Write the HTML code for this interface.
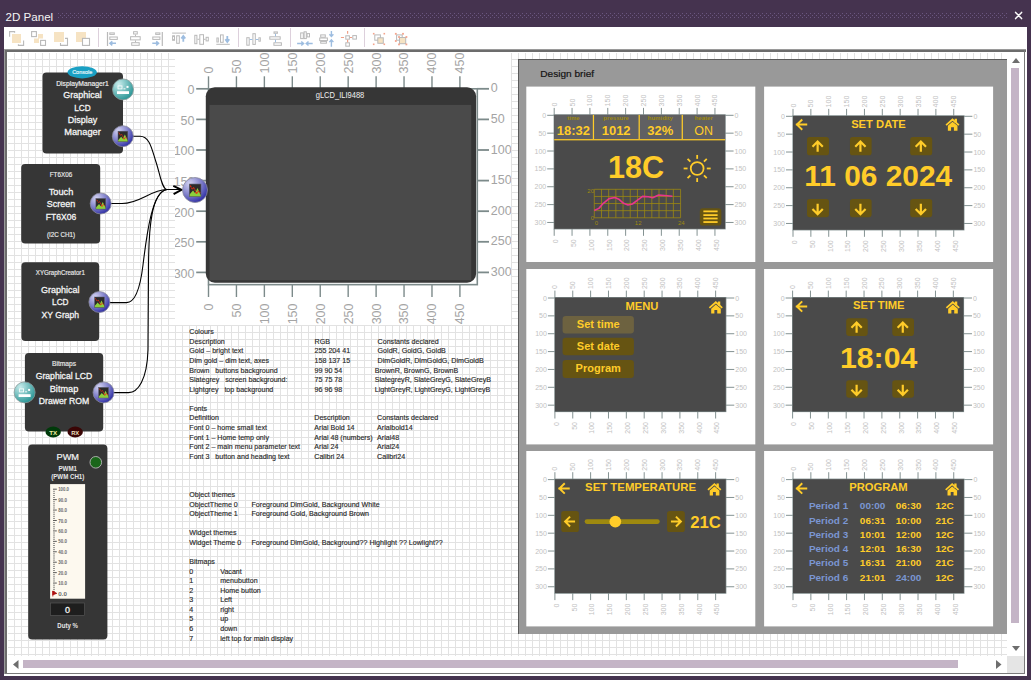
<!DOCTYPE html><html><head><meta charset="utf-8"><style>
html,body{margin:0;padding:0}
body{width:1031px;height:680px;overflow:hidden;position:relative;background:#45334f;font-family:"Liberation Sans",sans-serif}
.a{position:absolute}
</style></head><body>

<div class="a" style="left:5.5px;top:9px;font-size:11.6px;color:#f4f4f4;line-height:16px;">2D Panel</div>
<svg class="a" style="left:0;top:0" width="1031" height="27">
<defs><pattern id="dp" x="58" y="13" width="4" height="4" patternUnits="userSpaceOnUse"><rect x="0" y="0" width="1" height="1" fill="#6a5680"/><rect x="2" y="2" width="1" height="1" fill="#6a5680"/></pattern></defs>
<rect x="58" y="13" width="950" height="5" fill="url(#dp)"/>
<path d="M1015.6 12.4 L1021.6 18.6 M1021.6 12.4 L1015.6 18.6" stroke="#fafafa" stroke-width="1.5" stroke-linecap="round"/>
</svg>
<div class="a" style="left:4px;top:27px;width:1023px;height:649px;background:#fff"></div>
<svg class="a" style="left:0;top:27px" width="1031" height="22">
<path d="M9.6 9.8 V4.6 H14.6 V5.8" fill="none" stroke="#b9b9b9" stroke-width="1.1"/>
<rect x="12" y="7" width="9" height="9" fill="#f6e3c3"/>
<path d="M18.4 17.2 V18.4 H23.6 V13.4" fill="none" stroke="#b9b9b9" stroke-width="1.1"/>
<rect x="31.6" y="4.6" width="4.8" height="5" fill="none" stroke="#b9b9b9" stroke-width="1.1"/>
<path d="M38 7 H43 V11.5 H39 V16 H34 V11.5 H38Z" fill="#f6e3c3"/>
<rect x="40.6" y="13.4" width="4.9" height="5" fill="none" stroke="#b9b9b9" stroke-width="1.1"/>
<rect x="54" y="5" width="10" height="10" fill="#f6e3c3"/>
<path d="M65 11.4 H67.5 V18.4 H60.5 V16" fill="none" stroke="#b9b9b9" stroke-width="1.1"/>
<path d="M76 5 H86 V11 H82 V15 H76Z" fill="#f6e3c3"/>
<rect x="82.5" y="11.4" width="7" height="7" fill="none" stroke="#b9b9b9" stroke-width="1.1"/>
<rect x="98" y="1" width="1" height="19" fill="#ddd0dc"/>
<path d="M107.5 5 V19" fill="none" stroke="#b9b9b9" stroke-width="1.2"/>
<rect x="109.80" y="5.90" width="4.50" height="1.50" fill="none" stroke="#b9b9b9" stroke-width="1"/>
<rect x="109.80" y="10.00" width="7.50" height="2.40" fill="none" stroke="#b9b9b9" stroke-width="1"/>
<path d="M116 16.299999999999997 H110.5 M112.3 14.299999999999997 L110 16.299999999999997 L112.3 18.299999999999997" fill="none" stroke="#9dbde0" stroke-width="1.6"/>
<rect x="133.60" y="4.70" width="3.70" height="2.30" fill="none" stroke="#b9b9b9" stroke-width="1"/>
<rect x="130.60" y="9.70" width="9.60" height="3.20" fill="none" stroke="#b9b9b9" stroke-width="1"/>
<rect x="131.70" y="15.70" width="7.50" height="2.60" fill="none" stroke="#b9b9b9" stroke-width="1"/>
<path d="M135.5 7.5 V9.200000000000003 M135.5 13.399999999999999 V15.200000000000003" fill="none" stroke="#b9b9b9" stroke-width="1"/>
<path d="M162.3 5 V19" fill="none" stroke="#b9b9b9" stroke-width="1.2"/>
<rect x="155.70" y="5.90" width="4.20" height="1.50" fill="none" stroke="#b9b9b9" stroke-width="1"/>
<rect x="152.80" y="10.00" width="7.10" height="2.40" fill="none" stroke="#b9b9b9" stroke-width="1"/>
<path d="M152.3 16.299999999999997 H158 M156.2 14.299999999999997 L158.5 16.299999999999997 L156.2 18.299999999999997" fill="none" stroke="#9dbde0" stroke-width="1.6"/>
<path d="M172.1 6.100000000000001 H185.9" fill="none" stroke="#b9b9b9" stroke-width="1"/>
<rect x="172.60" y="8.80" width="1.90" height="4.50" fill="none" stroke="#b9b9b9" stroke-width="1"/>
<rect x="176.70" y="8.80" width="2.60" height="7.50" fill="none" stroke="#b9b9b9" stroke-width="1"/>
<path d="M183.3 14.799999999999997 V9.5 M181.3 11.5 L183.3 9 L185.3 11.5" fill="none" stroke="#9dbde0" stroke-width="1.8"/>
<rect x="194.80" y="8.30" width="2.10" height="8.40" fill="none" stroke="#b9b9b9" stroke-width="1"/>
<rect x="199.80" y="7.70" width="3.70" height="9.60" fill="none" stroke="#b9b9b9" stroke-width="1"/>
<rect x="206.10" y="10.30" width="2.20" height="3.60" fill="none" stroke="#b9b9b9" stroke-width="1"/>
<path d="M197.4 12.299999999999997 H199.3 M204 12.299999999999997 H205.6" fill="none" stroke="#b9b9b9" stroke-width="1"/>
<path d="M216.3 17.299999999999997 H229.8" fill="none" stroke="#b9b9b9" stroke-width="1"/>
<rect x="216.90" y="11.00" width="1.40" height="4.00" fill="none" stroke="#b9b9b9" stroke-width="1"/>
<rect x="220.50" y="7.90" width="2.70" height="7.40" fill="none" stroke="#b9b9b9" stroke-width="1"/>
<path d="M227.3 9 V14.5 M225.3 12.299999999999997 L227.3 15 L229.3 12.299999999999997" fill="none" stroke="#9dbde0" stroke-width="1.8"/>
<rect x="238" y="1" width="1" height="19" fill="#ddd0dc"/>
<rect x="246.80" y="10.70" width="2.40" height="7.50" fill="none" stroke="#b9b9b9" stroke-width="1"/>
<rect x="252.90" y="6.70" width="2.40" height="10.70" fill="none" stroke="#b9b9b9" stroke-width="1"/>
<rect x="258.90" y="10.80" width="1.40" height="3.40" fill="none" stroke="#b9b9b9" stroke-width="1"/>
<path d="M249.7 12.5 H252.4 M255.8 12.5 H258.4" fill="none" stroke="#9dbde0" stroke-width="1"/>
<rect x="274.00" y="4.90" width="3.40" height="1.40" fill="none" stroke="#b9b9b9" stroke-width="1"/>
<rect x="269.80" y="9.80" width="10.40" height="2.40" fill="none" stroke="#b9b9b9" stroke-width="1"/>
<rect x="273.90" y="15.80" width="7.50" height="2.50" fill="none" stroke="#b9b9b9" stroke-width="1"/>
<path d="M275.5 6.799999999999997 V9.299999999999997 M275.5 12.700000000000003 V15.299999999999997" fill="none" stroke="#9dbde0" stroke-width="1"/>
<rect x="290" y="1" width="1" height="19" fill="#ddd0dc"/>
<rect x="300.70" y="5.90" width="2.60" height="5.70" fill="none" stroke="#b9b9b9" stroke-width="1"/>
<rect x="304.10" y="4.80" width="2.20" height="6.80" fill="none" stroke="#b9b9b9" stroke-width="1"/>
<rect x="307.10" y="6.60" width="2.40" height="3.30" fill="none" stroke="#b9b9b9" stroke-width="1"/>
<path d="M297.1 16.5 H303.3 M301.3 14.5 L303.6 16.5 L301.3 18.5 M312.7 16.5 H306.5 M308.5 14.5 L306.2 16.5 L308.5 18.5" fill="none" stroke="#9dbde0" stroke-width="1.4"/>
<rect x="320.70" y="7.90" width="4.60" height="2.30" fill="none" stroke="#b9b9b9" stroke-width="1"/>
<rect x="319.70" y="11.00" width="7.70" height="2.60" fill="none" stroke="#b9b9b9" stroke-width="1"/>
<rect x="320.70" y="14.40" width="5.70" height="1.80" fill="none" stroke="#b9b9b9" stroke-width="1"/>
<path d="M331.4 4 V9.299999999999997 M329.4 7.299999999999997 L331.4 9.5 L333.4 7.299999999999997 M331.4 19.700000000000003 V13.100000000000001 M329.4 15.100000000000001 L331.4 12.899999999999999 L333.4 15.100000000000001" fill="none" stroke="#9dbde0" stroke-width="1.4"/>
<rect x="345.80" y="8.80" width="3.60" height="3.40" fill="none" stroke="#b9b9b9" stroke-width="1"/>
<rect x="352.80" y="8.60" width="3.60" height="3.50" fill="none" stroke="#b9b9b9" stroke-width="1"/>
<rect x="345.80" y="15.80" width="3.60" height="3.40" fill="none" stroke="#b9b9b9" stroke-width="1"/>
<path d="M340.9 10.5 H344 M347.6 4 V6.799999999999997 M350 10.5 H352 M347.6 12.700000000000003 V15.299999999999997" fill="none" stroke="#f0a088" stroke-width="1.2"/>
<rect x="364" y="1" width="1" height="19" fill="#ddd0dc"/>
<rect x="374.80" y="7.90" width="5.60" height="5.30" fill="none" stroke="#b9b9b9" stroke-width="1"/>
<rect x="377.80" y="10.80" width="5.50" height="5.50" fill="#f6e3c3" stroke="#b9b9b9" stroke-width="1"/>
<g fill="#f4a48c"><rect x="372.9" y="5.9" width="1.6" height="1.6"/><rect x="383.5" y="5.9" width="1.6" height="1.6"/><rect x="372.9" y="16.5" width="1.6" height="1.6"/><rect x="383.5" y="16.5" width="1.6" height="1.6"/></g>
<rect x="396.60" y="7.90" width="5.60" height="5.30" fill="none" stroke="#b9b9b9" stroke-width="1"/>
<rect x="399.50" y="10.50" width="6.20" height="6.20" fill="#f6e3c3" stroke="#b9b9b9" stroke-width="1"/>
<g fill="#f4a48c"><rect x="394.9" y="5.9" width="1.8" height="1.8"/><rect x="402.1" y="5.9" width="1.8" height="1.8"/><rect x="394.9" y="13.1" width="1.8" height="1.8"/><rect x="398.1" y="9.1" width="1.8" height="1.8"/><rect x="405.5" y="9.1" width="1.8" height="1.8"/><rect x="398.1" y="16.5" width="1.8" height="1.8"/><rect x="405.5" y="16.5" width="1.8" height="1.8"/></g>
</svg>
<div class="a" style="left:4px;top:49px;width:1022px;height:1px;background:#9a9a9a"></div>
<div class="a" style="left:4px;top:50px;width:1022px;height:2px;background:#6c6c6c"></div>
<div class="a" style="left:4px;top:49px;width:1px;height:625px;background:#9a9a9a"></div>
<div class="a" style="left:5px;top:50px;width:2px;height:624px;background:#6c6c6c"></div>
<div class="a" style="left:1024px;top:50px;width:1px;height:624px;background:#7a7a7a"></div>
<div class="a" style="left:5px;top:673px;width:1020px;height:1px;background:#7a7a7a"></div>
<div class="a" style="left:8px;top:53px;width:999px;height:603px;background-image:linear-gradient(to right,#e2e2e2 1px,transparent 1px),linear-gradient(to bottom,#e2e2e2 1px,transparent 1px);background-size:7px 7px;background-position:6px 0px,0px 6px;"></div>
<svg class="a" style="left:0;top:0" width="1031" height="680">
<path d="M1012 63 L1016 58 L1020 63Z" fill="#6e6e6e"/>
<rect x="1011" y="68" width="8" height="555" fill="#c4b4c6"/>
<path d="M1012 646 L1016 651 L1020 646Z" fill="#6e6e6e"/>
<path d="M18.5 660 L13 664.5 L18.5 669Z" fill="#6e6e6e"/>
<rect x="23" y="660" width="935" height="8" fill="#c4b4c6"/>
<path d="M996 660 L1001.5 664.5 L996 669Z" fill="#6e6e6e"/>
<rect x="1007" y="656" width="17" height="17" fill="#e5e5e5"/>
</svg>
<svg class="a" style="left:0;top:0" width="1031" height="680" font-family="Liberation Sans, sans-serif">
<defs>
<clipPath id="cv"><rect x="7" y="52" width="1000" height="604"/></clipPath>
<radialGradient id="gb" cx="0.3" cy="0.25" r="0.85"><stop offset="0" stop-color="#d4d4f2"/><stop offset="0.55" stop-color="#7c7cc8"/><stop offset="1" stop-color="#2424a0"/></radialGradient>
<radialGradient id="gt" cx="0.3" cy="0.25" r="0.85"><stop offset="0" stop-color="#c8ecec"/><stop offset="0.55" stop-color="#6ab8b8"/><stop offset="1" stop-color="#1f9090"/></radialGradient>
</defs>
<g clip-path="url(#cv)">
<rect x="175" y="52" width="336" height="273" fill="#fff"/>
<g clip-path="url(#rb)">
<clipPath id="rb"><rect x="175" y="52" width="336" height="273"/></clipPath>
<line x1="208.50" y1="76.3" x2="208.50" y2="88.8" stroke="#7c8a8a" stroke-width="1.4"/>
<line x1="208.50" y1="284.6" x2="208.50" y2="297" stroke="#7c8a8a" stroke-width="1.4"/>
<text transform="translate(212.90,73.5) rotate(-90)" font-size="12.5" fill="#a4a4a4">0</text>
<text transform="translate(212.90,303.5) rotate(-90)" font-size="12.5" fill="#a4a4a4" text-anchor="end">0</text>
<line x1="236.44" y1="76.3" x2="236.44" y2="88.8" stroke="#7c8a8a" stroke-width="1.4"/>
<line x1="236.44" y1="284.6" x2="236.44" y2="297" stroke="#7c8a8a" stroke-width="1.4"/>
<text transform="translate(240.84,73.5) rotate(-90)" font-size="12.5" fill="#a4a4a4">50</text>
<text transform="translate(240.84,303.5) rotate(-90)" font-size="12.5" fill="#a4a4a4" text-anchor="end">50</text>
<line x1="264.37" y1="76.3" x2="264.37" y2="88.8" stroke="#7c8a8a" stroke-width="1.4"/>
<line x1="264.37" y1="284.6" x2="264.37" y2="297" stroke="#7c8a8a" stroke-width="1.4"/>
<text transform="translate(268.77,73.5) rotate(-90)" font-size="12.5" fill="#a4a4a4">100</text>
<text transform="translate(268.77,303.5) rotate(-90)" font-size="12.5" fill="#a4a4a4" text-anchor="end">100</text>
<line x1="292.31" y1="76.3" x2="292.31" y2="88.8" stroke="#7c8a8a" stroke-width="1.4"/>
<line x1="292.31" y1="284.6" x2="292.31" y2="297" stroke="#7c8a8a" stroke-width="1.4"/>
<text transform="translate(296.70,73.5) rotate(-90)" font-size="12.5" fill="#a4a4a4">150</text>
<text transform="translate(296.70,303.5) rotate(-90)" font-size="12.5" fill="#a4a4a4" text-anchor="end">150</text>
<line x1="320.24" y1="76.3" x2="320.24" y2="88.8" stroke="#7c8a8a" stroke-width="1.4"/>
<line x1="320.24" y1="284.6" x2="320.24" y2="297" stroke="#7c8a8a" stroke-width="1.4"/>
<text transform="translate(324.64,73.5) rotate(-90)" font-size="12.5" fill="#a4a4a4">200</text>
<text transform="translate(324.64,303.5) rotate(-90)" font-size="12.5" fill="#a4a4a4" text-anchor="end">200</text>
<line x1="348.17" y1="76.3" x2="348.17" y2="88.8" stroke="#7c8a8a" stroke-width="1.4"/>
<line x1="348.17" y1="284.6" x2="348.17" y2="297" stroke="#7c8a8a" stroke-width="1.4"/>
<text transform="translate(352.57,73.5) rotate(-90)" font-size="12.5" fill="#a4a4a4">250</text>
<text transform="translate(352.57,303.5) rotate(-90)" font-size="12.5" fill="#a4a4a4" text-anchor="end">250</text>
<line x1="376.11" y1="76.3" x2="376.11" y2="88.8" stroke="#7c8a8a" stroke-width="1.4"/>
<line x1="376.11" y1="284.6" x2="376.11" y2="297" stroke="#7c8a8a" stroke-width="1.4"/>
<text transform="translate(380.51,73.5) rotate(-90)" font-size="12.5" fill="#a4a4a4">300</text>
<text transform="translate(380.51,303.5) rotate(-90)" font-size="12.5" fill="#a4a4a4" text-anchor="end">300</text>
<line x1="404.04" y1="76.3" x2="404.04" y2="88.8" stroke="#7c8a8a" stroke-width="1.4"/>
<line x1="404.04" y1="284.6" x2="404.04" y2="297" stroke="#7c8a8a" stroke-width="1.4"/>
<text transform="translate(408.44,73.5) rotate(-90)" font-size="12.5" fill="#a4a4a4">350</text>
<text transform="translate(408.44,303.5) rotate(-90)" font-size="12.5" fill="#a4a4a4" text-anchor="end">350</text>
<line x1="431.98" y1="76.3" x2="431.98" y2="88.8" stroke="#7c8a8a" stroke-width="1.4"/>
<line x1="431.98" y1="284.6" x2="431.98" y2="297" stroke="#7c8a8a" stroke-width="1.4"/>
<text transform="translate(436.38,73.5) rotate(-90)" font-size="12.5" fill="#a4a4a4">400</text>
<text transform="translate(436.38,303.5) rotate(-90)" font-size="12.5" fill="#a4a4a4" text-anchor="end">400</text>
<line x1="459.91" y1="76.3" x2="459.91" y2="88.8" stroke="#7c8a8a" stroke-width="1.4"/>
<line x1="459.91" y1="284.6" x2="459.91" y2="297" stroke="#7c8a8a" stroke-width="1.4"/>
<text transform="translate(464.31,73.5) rotate(-90)" font-size="12.5" fill="#a4a4a4">450</text>
<text transform="translate(464.31,303.5) rotate(-90)" font-size="12.5" fill="#a4a4a4" text-anchor="end">450</text>
<line x1="196.2" y1="88.80" x2="208.5" y2="88.80" stroke="#7c8a8a" stroke-width="1.7"/>
<line x1="477" y1="88.80" x2="489" y2="88.80" stroke="#7c8a8a" stroke-width="1.8"/>
<text x="194.5" y="94.20" font-size="12.5" fill="#a4a4a4" text-anchor="end">0</text>
<text x="490.8" y="92.40" font-size="12.5" fill="#a4a4a4">0</text>
<line x1="196.2" y1="119.40" x2="208.5" y2="119.40" stroke="#7c8a8a" stroke-width="1.7"/>
<line x1="477" y1="119.40" x2="489" y2="119.40" stroke="#7c8a8a" stroke-width="1.8"/>
<text x="194.5" y="124.80" font-size="12.5" fill="#a4a4a4" text-anchor="end">50</text>
<text x="490.8" y="123.00" font-size="12.5" fill="#a4a4a4">50</text>
<line x1="196.2" y1="150.00" x2="208.5" y2="150.00" stroke="#7c8a8a" stroke-width="1.7"/>
<line x1="477" y1="150.00" x2="489" y2="150.00" stroke="#7c8a8a" stroke-width="1.8"/>
<text x="194.5" y="155.40" font-size="12.5" fill="#a4a4a4" text-anchor="end">100</text>
<text x="490.8" y="153.60" font-size="12.5" fill="#a4a4a4">100</text>
<line x1="196.2" y1="180.60" x2="208.5" y2="180.60" stroke="#7c8a8a" stroke-width="1.7"/>
<line x1="477" y1="180.60" x2="489" y2="180.60" stroke="#7c8a8a" stroke-width="1.8"/>
<text x="194.5" y="186.00" font-size="12.5" fill="#a4a4a4" text-anchor="end">150</text>
<text x="490.8" y="184.20" font-size="12.5" fill="#a4a4a4">150</text>
<line x1="196.2" y1="211.20" x2="208.5" y2="211.20" stroke="#7c8a8a" stroke-width="1.7"/>
<line x1="477" y1="211.20" x2="489" y2="211.20" stroke="#7c8a8a" stroke-width="1.8"/>
<text x="194.5" y="216.60" font-size="12.5" fill="#a4a4a4" text-anchor="end">200</text>
<text x="490.8" y="214.80" font-size="12.5" fill="#a4a4a4">200</text>
<line x1="196.2" y1="241.80" x2="208.5" y2="241.80" stroke="#7c8a8a" stroke-width="1.7"/>
<line x1="477" y1="241.80" x2="489" y2="241.80" stroke="#7c8a8a" stroke-width="1.8"/>
<text x="194.5" y="247.20" font-size="12.5" fill="#a4a4a4" text-anchor="end">250</text>
<text x="490.8" y="245.40" font-size="12.5" fill="#a4a4a4">250</text>
<line x1="196.2" y1="272.40" x2="208.5" y2="272.40" stroke="#7c8a8a" stroke-width="1.7"/>
<line x1="477" y1="272.40" x2="489" y2="272.40" stroke="#7c8a8a" stroke-width="1.8"/>
<text x="194.5" y="277.80" font-size="12.5" fill="#a4a4a4" text-anchor="end">300</text>
<text x="490.8" y="276.00" font-size="12.5" fill="#a4a4a4">300</text>
<rect x="208.5" y="88.8" width="268.8" height="195.84" fill="none" stroke="#7c8a8a" stroke-width="1.6"/>
</g>
<rect x="205.8" y="87.3" width="270.3" height="195.4" rx="9" fill="#363636"/>
<rect x="209.5" y="104.9" width="261.7" height="175.3" fill="#4a4a4a"/>
<text x="340" y="97.8" font-size="9" fill="#f0f0f0" text-anchor="middle" textLength="48.5" lengthAdjust="spacingAndGlyphs">gLCD_ILI9488</text>
<path d="M133 136.2 H140 C150 136.2 152 150 156 162 C160 174 162 189.5 167 189.5 H181" fill="none" stroke="#000" stroke-width="1.1"/>
<path d="M111 203.5 H122 C140 203.5 150 190 167 189.5 H181" fill="none" stroke="#000" stroke-width="1.1"/>
<path d="M109.5 302.6 H126.5 C134 302.6 140 290 143 265 C146.6 235 152 191 167 189.5 H181" fill="none" stroke="#000" stroke-width="1.1"/>
<path d="M113.5 392.6 H128.5 C138 392.6 147 380 148 350 L148.5 270 C148.5 225 152 192 167 189.5 H181" fill="none" stroke="#000" stroke-width="1.1"/>
<path d="M173.3 185.8 L181.5 189.8 L173.6 194.2" fill="none" stroke="#000" stroke-width="2"/>
<rect x="42.5" y="72.5" width="80.5" height="81" rx="4" fill="#363636"/>
<ellipse cx="82.2" cy="72.3" rx="14.6" ry="6.1" fill="#1aa0c4"/>
<text x="82.2" y="73.8" font-size="5.5" fill="#e8f6fa" text-anchor="middle" textLength="20" lengthAdjust="spacingAndGlyphs" stroke="#e8f6fa" stroke-width="0.18">Console</text>
<text x="82.5" y="85.6" font-size="8" fill="#f0f0f0" text-anchor="middle" textLength="52.5" lengthAdjust="spacingAndGlyphs" stroke="#f0f0f0" stroke-width="0.18">DisplayManager1</text>
<text x="82.5" y="98.2" font-size="9.2" fill="#f4f4f4" text-anchor="middle" textLength="38.5" lengthAdjust="spacingAndGlyphs" stroke="#f4f4f4" stroke-width="0.3">Graphical</text>
<text x="82.5" y="110.7" font-size="9.2" fill="#f4f4f4" text-anchor="middle" textLength="16.5" lengthAdjust="spacingAndGlyphs" stroke="#f4f4f4" stroke-width="0.3">LCD</text>
<text x="82.5" y="123.0" font-size="9.2" fill="#f4f4f4" text-anchor="middle" textLength="29.5" lengthAdjust="spacingAndGlyphs" stroke="#f4f4f4" stroke-width="0.3">Display</text>
<text x="82.5" y="135.3" font-size="9.2" fill="#f4f4f4" text-anchor="middle" textLength="36.5" lengthAdjust="spacingAndGlyphs" stroke="#f4f4f4" stroke-width="0.3">Manager</text>
<circle cx="123" cy="89.4" r="10.5" fill="url(#gt)" stroke="#8a9a9a" stroke-width="0.8"/>
<rect x="117" y="91.2" width="12" height="2.8" fill="#fff"/>
<rect x="118" y="85.9" width="4" height="3" fill="none" stroke="#fff" stroke-width="0.8"/>
<rect x="123.5" y="88.4" width="2" height="0.9" fill="#fff"/><rect x="126.5" y="85.9" width="2" height="2" fill="#fff"/>
<circle cx="122.8" cy="136.2" r="10.5" fill="url(#gb)" stroke="#8a8a9a" stroke-width="0.8"/>
<rect x="118.00" y="131.20" width="9.80" height="10.60" fill="#2b2b2b"/>
<path d="M118.00 141.80 L118.00 140.21 L121.14 136.71 L122.90 138.83 L124.86 134.59 L127.80 140.53 L127.80 141.80Z" fill="#8cd03c"/>
<path d="M118.78 132.47 L120.45 135.23 L121.72 134.38 L122.90 136.50 L124.08 139.47 L125.35 137.03 L127.31 138.83" fill="none" stroke="#e82a10" stroke-width="0.90" stroke-dasharray="1.60 0.50"/>
<rect x="118.00" y="131.20" width="9.80" height="10.60" fill="none" stroke="#5a5a6a" stroke-width="0.50"/>
<rect x="21.2" y="164.1" width="79" height="79.4" rx="4" fill="#363636"/>
<text x="61" y="176.6" font-size="7" fill="#e8e8e8" text-anchor="middle" textLength="22.5" lengthAdjust="spacingAndGlyphs" stroke="#e8e8e8" stroke-width="0.18">FT6X06</text>
<text x="61" y="195.2" font-size="9.2" fill="#f4f4f4" text-anchor="middle" textLength="24.5" lengthAdjust="spacingAndGlyphs" stroke="#f4f4f4" stroke-width="0.3">Touch</text>
<text x="61" y="207.4" font-size="9.2" fill="#f4f4f4" text-anchor="middle" textLength="28.5" lengthAdjust="spacingAndGlyphs" stroke="#f4f4f4" stroke-width="0.3">Screen</text>
<text x="61" y="220.0" font-size="9.2" fill="#f4f4f4" text-anchor="middle" textLength="30.5" lengthAdjust="spacingAndGlyphs" stroke="#f4f4f4" stroke-width="0.3">FT6X06</text>
<text x="61" y="236.5" font-size="7" fill="#e8e8e8" text-anchor="middle" textLength="28" lengthAdjust="spacingAndGlyphs" stroke="#e8e8e8" stroke-width="0.18">(I2C CH1)</text>
<circle cx="100.7" cy="203.5" r="10.5" fill="url(#gb)" stroke="#8a8a9a" stroke-width="0.8"/>
<rect x="95.90" y="198.50" width="9.80" height="10.60" fill="#2b2b2b"/>
<path d="M95.90 209.10 L95.90 207.51 L99.04 204.01 L100.80 206.13 L102.76 201.89 L105.70 207.83 L105.70 209.10Z" fill="#8cd03c"/>
<path d="M96.68 199.77 L98.35 202.53 L99.62 201.68 L100.80 203.80 L101.98 206.77 L103.25 204.33 L105.21 206.13" fill="none" stroke="#e82a10" stroke-width="0.90" stroke-dasharray="1.60 0.50"/>
<rect x="95.90" y="198.50" width="9.80" height="10.60" fill="none" stroke="#5a5a6a" stroke-width="0.50"/>
<rect x="21.4" y="262.3" width="77.8" height="78.8" rx="4" fill="#363636"/>
<text x="60.3" y="274.8" font-size="7" fill="#e8e8e8" text-anchor="middle" textLength="49" lengthAdjust="spacingAndGlyphs" stroke="#e8e8e8" stroke-width="0.18">XYGraphCreator1</text>
<text x="60.3" y="293.3" font-size="9.2" fill="#f4f4f4" text-anchor="middle" textLength="38.5" lengthAdjust="spacingAndGlyphs" stroke="#f4f4f4" stroke-width="0.3">Graphical</text>
<text x="60.3" y="305.3" font-size="9.2" fill="#f4f4f4" text-anchor="middle" textLength="16.5" lengthAdjust="spacingAndGlyphs" stroke="#f4f4f4" stroke-width="0.3">LCD</text>
<text x="60.3" y="318.2" font-size="9.2" fill="#f4f4f4" text-anchor="middle" textLength="37.5" lengthAdjust="spacingAndGlyphs" stroke="#f4f4f4" stroke-width="0.3">XY Graph</text>
<circle cx="99.4" cy="302" r="10.5" fill="url(#gb)" stroke="#8a8a9a" stroke-width="0.8"/>
<rect x="94.60" y="297.00" width="9.80" height="10.60" fill="#2b2b2b"/>
<path d="M94.60 307.60 L94.60 306.01 L97.74 302.51 L99.50 304.63 L101.46 300.39 L104.40 306.33 L104.40 307.60Z" fill="#8cd03c"/>
<path d="M95.38 298.27 L97.05 301.03 L98.32 300.18 L99.50 302.30 L100.68 305.27 L101.95 302.83 L103.91 304.63" fill="none" stroke="#e82a10" stroke-width="0.90" stroke-dasharray="1.60 0.50"/>
<rect x="94.60" y="297.00" width="9.80" height="10.60" fill="none" stroke="#5a5a6a" stroke-width="0.50"/>
<rect x="24.9" y="353.1" width="78.3" height="78.4" rx="4" fill="#363636"/>
<text x="64" y="365.8" font-size="7" fill="#e8e8e8" text-anchor="middle" textLength="24" lengthAdjust="spacingAndGlyphs" stroke="#e8e8e8" stroke-width="0.18">Bitmaps</text>
<text x="64" y="379.2" font-size="9.2" fill="#f4f4f4" text-anchor="middle" textLength="56.5" lengthAdjust="spacingAndGlyphs" stroke="#f4f4f4" stroke-width="0.3">Graphical LCD</text>
<text x="64" y="392.0" font-size="9.2" fill="#f4f4f4" text-anchor="middle" textLength="28.5" lengthAdjust="spacingAndGlyphs" stroke="#f4f4f4" stroke-width="0.3">Bitmap</text>
<text x="64" y="404.2" font-size="9.2" fill="#f4f4f4" text-anchor="middle" textLength="50.5" lengthAdjust="spacingAndGlyphs" stroke="#f4f4f4" stroke-width="0.3">Drawer ROM</text>
<circle cx="24.6" cy="392.4" r="10.5" fill="url(#gt)" stroke="#8a9a9a" stroke-width="0.8"/>
<rect x="18.6" y="394.2" width="12" height="2.8" fill="#fff"/>
<rect x="19.6" y="388.9" width="4" height="3" fill="none" stroke="#fff" stroke-width="0.8"/>
<rect x="25.1" y="391.4" width="2" height="0.9" fill="#fff"/><rect x="28.1" y="388.9" width="2" height="2" fill="#fff"/>
<circle cx="103.5" cy="392.4" r="10.5" fill="url(#gb)" stroke="#8a8a9a" stroke-width="0.8"/>
<rect x="98.70" y="387.40" width="9.80" height="10.60" fill="#2b2b2b"/>
<path d="M98.70 398.00 L98.70 396.41 L101.84 392.91 L103.60 395.03 L105.56 390.79 L108.50 396.73 L108.50 398.00Z" fill="#8cd03c"/>
<path d="M99.48 388.67 L101.15 391.43 L102.42 390.58 L103.60 392.70 L104.78 395.67 L106.05 393.23 L108.01 395.03" fill="none" stroke="#e82a10" stroke-width="0.90" stroke-dasharray="1.60 0.50"/>
<rect x="98.70" y="387.40" width="9.80" height="10.60" fill="none" stroke="#5a5a6a" stroke-width="0.50"/>
<ellipse cx="53.2" cy="432" rx="7.7" ry="5.4" fill="#003a0a"/>
<text x="53.2" y="434.5" font-size="6.2" fill="#f0f0a0" text-anchor="middle" textLength="8" lengthAdjust="spacingAndGlyphs" font-weight="bold">TX</text>
<ellipse cx="75.2" cy="432" rx="7.7" ry="5.4" fill="#3a0505"/>
<text x="75.2" y="434.5" font-size="6.2" fill="#f0e0c0" text-anchor="middle" textLength="8" lengthAdjust="spacingAndGlyphs" font-weight="bold">RX</text>
<rect x="28.2" y="444.4" width="79.2" height="195" rx="4" fill="#363636"/>
<text x="67.75" y="460.3" font-size="8.6" fill="#f4f4f4" text-anchor="middle" textLength="22.5" lengthAdjust="spacingAndGlyphs" stroke="#f4f4f4" stroke-width="0.18">PWM</text>
<circle cx="95.8" cy="462.3" r="5.8" fill="#1a661a" stroke="#b8b8b8" stroke-width="0.9"/>
<text x="67.75" y="471" font-size="6.4" fill="#e8e8e8" text-anchor="middle" textLength="18.6" lengthAdjust="spacingAndGlyphs" font-weight="bold">PWM1</text>
<text x="67.75" y="478.6" font-size="6.4" fill="#e8e8e8" text-anchor="middle" textLength="33" lengthAdjust="spacingAndGlyphs" font-weight="bold">(PWM CH1)</text>
<rect x="50.1" y="484.1" width="35" height="114.6" fill="#fdf9ef"/>
<line x1="53" y1="593.50" x2="56.8" y2="593.50" stroke="#484848" stroke-width="0.9"/>
<line x1="53" y1="591.41" x2="55" y2="591.41" stroke="#484848" stroke-width="0.6"/>
<line x1="53" y1="589.33" x2="55" y2="589.33" stroke="#484848" stroke-width="0.6"/>
<line x1="53" y1="587.24" x2="55" y2="587.24" stroke="#484848" stroke-width="0.6"/>
<line x1="53" y1="585.16" x2="55" y2="585.16" stroke="#484848" stroke-width="0.6"/>
<line x1="53" y1="583.07" x2="56.8" y2="583.07" stroke="#484848" stroke-width="0.9"/>
<line x1="53" y1="580.98" x2="55" y2="580.98" stroke="#484848" stroke-width="0.6"/>
<line x1="53" y1="578.90" x2="55" y2="578.90" stroke="#484848" stroke-width="0.6"/>
<line x1="53" y1="576.81" x2="55" y2="576.81" stroke="#484848" stroke-width="0.6"/>
<line x1="53" y1="574.73" x2="55" y2="574.73" stroke="#484848" stroke-width="0.6"/>
<line x1="53" y1="572.64" x2="56.8" y2="572.64" stroke="#484848" stroke-width="0.9"/>
<line x1="53" y1="570.55" x2="55" y2="570.55" stroke="#484848" stroke-width="0.6"/>
<line x1="53" y1="568.47" x2="55" y2="568.47" stroke="#484848" stroke-width="0.6"/>
<line x1="53" y1="566.38" x2="55" y2="566.38" stroke="#484848" stroke-width="0.6"/>
<line x1="53" y1="564.30" x2="55" y2="564.30" stroke="#484848" stroke-width="0.6"/>
<line x1="53" y1="562.21" x2="56.8" y2="562.21" stroke="#484848" stroke-width="0.9"/>
<line x1="53" y1="560.12" x2="55" y2="560.12" stroke="#484848" stroke-width="0.6"/>
<line x1="53" y1="558.04" x2="55" y2="558.04" stroke="#484848" stroke-width="0.6"/>
<line x1="53" y1="555.95" x2="55" y2="555.95" stroke="#484848" stroke-width="0.6"/>
<line x1="53" y1="553.87" x2="55" y2="553.87" stroke="#484848" stroke-width="0.6"/>
<line x1="53" y1="551.78" x2="56.8" y2="551.78" stroke="#484848" stroke-width="0.9"/>
<line x1="53" y1="549.69" x2="55" y2="549.69" stroke="#484848" stroke-width="0.6"/>
<line x1="53" y1="547.61" x2="55" y2="547.61" stroke="#484848" stroke-width="0.6"/>
<line x1="53" y1="545.52" x2="55" y2="545.52" stroke="#484848" stroke-width="0.6"/>
<line x1="53" y1="543.44" x2="55" y2="543.44" stroke="#484848" stroke-width="0.6"/>
<line x1="53" y1="541.35" x2="56.8" y2="541.35" stroke="#484848" stroke-width="0.9"/>
<line x1="53" y1="539.26" x2="55" y2="539.26" stroke="#484848" stroke-width="0.6"/>
<line x1="53" y1="537.18" x2="55" y2="537.18" stroke="#484848" stroke-width="0.6"/>
<line x1="53" y1="535.09" x2="55" y2="535.09" stroke="#484848" stroke-width="0.6"/>
<line x1="53" y1="533.01" x2="55" y2="533.01" stroke="#484848" stroke-width="0.6"/>
<line x1="53" y1="530.92" x2="56.8" y2="530.92" stroke="#484848" stroke-width="0.9"/>
<line x1="53" y1="528.83" x2="55" y2="528.83" stroke="#484848" stroke-width="0.6"/>
<line x1="53" y1="526.75" x2="55" y2="526.75" stroke="#484848" stroke-width="0.6"/>
<line x1="53" y1="524.66" x2="55" y2="524.66" stroke="#484848" stroke-width="0.6"/>
<line x1="53" y1="522.58" x2="55" y2="522.58" stroke="#484848" stroke-width="0.6"/>
<line x1="53" y1="520.49" x2="56.8" y2="520.49" stroke="#484848" stroke-width="0.9"/>
<line x1="53" y1="518.40" x2="55" y2="518.40" stroke="#484848" stroke-width="0.6"/>
<line x1="53" y1="516.32" x2="55" y2="516.32" stroke="#484848" stroke-width="0.6"/>
<line x1="53" y1="514.23" x2="55" y2="514.23" stroke="#484848" stroke-width="0.6"/>
<line x1="53" y1="512.15" x2="55" y2="512.15" stroke="#484848" stroke-width="0.6"/>
<line x1="53" y1="510.06" x2="56.8" y2="510.06" stroke="#484848" stroke-width="0.9"/>
<line x1="53" y1="507.97" x2="55" y2="507.97" stroke="#484848" stroke-width="0.6"/>
<line x1="53" y1="505.89" x2="55" y2="505.89" stroke="#484848" stroke-width="0.6"/>
<line x1="53" y1="503.80" x2="55" y2="503.80" stroke="#484848" stroke-width="0.6"/>
<line x1="53" y1="501.72" x2="55" y2="501.72" stroke="#484848" stroke-width="0.6"/>
<line x1="53" y1="499.63" x2="56.8" y2="499.63" stroke="#484848" stroke-width="0.9"/>
<line x1="53" y1="497.54" x2="55" y2="497.54" stroke="#484848" stroke-width="0.6"/>
<line x1="53" y1="495.46" x2="55" y2="495.46" stroke="#484848" stroke-width="0.6"/>
<line x1="53" y1="493.37" x2="55" y2="493.37" stroke="#484848" stroke-width="0.6"/>
<line x1="53" y1="491.29" x2="55" y2="491.29" stroke="#484848" stroke-width="0.6"/>
<line x1="53" y1="489.20" x2="56.8" y2="489.20" stroke="#484848" stroke-width="0.9"/>
<text x="58.2" y="595.60" font-size="4.8" font-weight="bold" fill="#6a6a6a" textLength="8.7" lengthAdjust="spacingAndGlyphs">0.0</text>
<text x="58.2" y="585.17" font-size="4.8" font-weight="bold" fill="#6a6a6a" textLength="8.7" lengthAdjust="spacingAndGlyphs">10.0</text>
<text x="58.2" y="574.74" font-size="4.8" font-weight="bold" fill="#6a6a6a" textLength="8.7" lengthAdjust="spacingAndGlyphs">20.0</text>
<text x="58.2" y="564.31" font-size="4.8" font-weight="bold" fill="#6a6a6a" textLength="8.7" lengthAdjust="spacingAndGlyphs">30.0</text>
<text x="58.2" y="553.88" font-size="4.8" font-weight="bold" fill="#6a6a6a" textLength="8.7" lengthAdjust="spacingAndGlyphs">40.0</text>
<text x="58.2" y="543.45" font-size="4.8" font-weight="bold" fill="#6a6a6a" textLength="8.7" lengthAdjust="spacingAndGlyphs">50.0</text>
<text x="58.2" y="533.02" font-size="4.8" font-weight="bold" fill="#6a6a6a" textLength="8.7" lengthAdjust="spacingAndGlyphs">60.0</text>
<text x="58.2" y="522.59" font-size="4.8" font-weight="bold" fill="#6a6a6a" textLength="8.7" lengthAdjust="spacingAndGlyphs">70.0</text>
<text x="58.2" y="512.16" font-size="4.8" font-weight="bold" fill="#6a6a6a" textLength="8.7" lengthAdjust="spacingAndGlyphs">80.0</text>
<text x="58.2" y="501.73" font-size="4.8" font-weight="bold" fill="#6a6a6a" textLength="8.7" lengthAdjust="spacingAndGlyphs">90.0</text>
<text x="58.2" y="491.30" font-size="4.8" font-weight="bold" fill="#6a6a6a" textLength="10.8" lengthAdjust="spacingAndGlyphs">100.0</text>
<path d="M52.8 591 V596.5 M52.8 591 L56.5 593.3 L52.8 595Z" fill="#b01010" stroke="#b01010" stroke-width="0.8"/>
<rect x="50.3" y="603" width="34.2" height="12.3" fill="#1e1e1e" stroke="#5a5a5a" stroke-width="0.6"/>
<text x="67.6" y="612.6" font-size="9" fill="#f4f4f4" text-anchor="middle" stroke="#f4f4f4" stroke-width="0.3">0</text>
<text x="67.6" y="628.3" font-size="7" fill="#e8e8e8" text-anchor="middle" textLength="20.5" lengthAdjust="spacingAndGlyphs" font-weight="bold">Duty %</text>
<text x="189.3" y="334.2" font-size="7.1" fill="#2a2a2a" stroke="#2a2a2a" stroke-width="0.15" xml:space="preserve">Colours</text>
<text x="189.3" y="344.3" font-size="7.1" fill="#2a2a2a" stroke="#2a2a2a" stroke-width="0.15" xml:space="preserve">Description</text>
<text x="314.6" y="344.3" font-size="7.1" fill="#2a2a2a" stroke="#2a2a2a" stroke-width="0.15" xml:space="preserve">RGB</text>
<text x="377.6" y="344.3" font-size="7.1" fill="#2a2a2a" stroke="#2a2a2a" stroke-width="0.15" xml:space="preserve">Constants declared</text>
<text x="189.3" y="353.2" font-size="7.1" fill="#2a2a2a" stroke="#2a2a2a" stroke-width="0.15" xml:space="preserve">Gold – bright text</text>
<text x="314.6" y="353.2" font-size="7.1" fill="#2a2a2a" stroke="#2a2a2a" stroke-width="0.15" xml:space="preserve">255 204 41</text>
<text x="377.6" y="353.2" font-size="7.1" fill="#2a2a2a" stroke="#2a2a2a" stroke-width="0.15" xml:space="preserve">GoldR, GoldG, GoldB</text>
<text x="189.3" y="363.2" font-size="7.1" fill="#2a2a2a" stroke="#2a2a2a" stroke-width="0.15" xml:space="preserve">Dim gold – dim text, axes</text>
<text x="314.6" y="363.2" font-size="7.1" fill="#2a2a2a" stroke="#2a2a2a" stroke-width="0.15" xml:space="preserve">158 137 15</text>
<text x="377.6" y="363.2" font-size="7.1" fill="#2a2a2a" stroke="#2a2a2a" stroke-width="0.15" xml:space="preserve">DimGoldR, DimGoldG, DimGoldB</text>
<text x="189.3" y="373.0" font-size="7.1" fill="#2a2a2a" stroke="#2a2a2a" stroke-width="0.15" xml:space="preserve">Brown   buttons background</text>
<text x="314.6" y="373.0" font-size="7.1" fill="#2a2a2a" stroke="#2a2a2a" stroke-width="0.15" xml:space="preserve">99 90 54</text>
<text x="374.7" y="373.0" font-size="7.1" fill="#2a2a2a" stroke="#2a2a2a" stroke-width="0.15" xml:space="preserve">BrownR, BrownG, BrownB</text>
<text x="189.3" y="382.3" font-size="7.1" fill="#2a2a2a" stroke="#2a2a2a" stroke-width="0.15" xml:space="preserve">Slategrey   screen background:</text>
<text x="314.6" y="382.3" font-size="7.1" fill="#2a2a2a" stroke="#2a2a2a" stroke-width="0.15" xml:space="preserve">75 75 78</text>
<text x="374.7" y="382.3" font-size="7.1" fill="#2a2a2a" stroke="#2a2a2a" stroke-width="0.15" xml:space="preserve">SlategreyR, SlateGreyG, SlateGreyB</text>
<text x="189.3" y="391.9" font-size="7.1" fill="#2a2a2a" stroke="#2a2a2a" stroke-width="0.15" xml:space="preserve">Lightgrey   top background</text>
<text x="314.6" y="391.9" font-size="7.1" fill="#2a2a2a" stroke="#2a2a2a" stroke-width="0.15" xml:space="preserve">96 96 98</text>
<text x="374.7" y="391.9" font-size="7.1" fill="#2a2a2a" stroke="#2a2a2a" stroke-width="0.15" xml:space="preserve">LightGreyR, LightGreyG, LightGreyB</text>
<text x="189.3" y="411.0" font-size="7.1" fill="#2a2a2a" stroke="#2a2a2a" stroke-width="0.15" xml:space="preserve">Fonts</text>
<text x="189.3" y="420.2" font-size="7.1" fill="#2a2a2a" stroke="#2a2a2a" stroke-width="0.15" xml:space="preserve">Definition</text>
<text x="314.3" y="420.2" font-size="7.1" fill="#2a2a2a" stroke="#2a2a2a" stroke-width="0.15" xml:space="preserve">Description</text>
<text x="377.1" y="420.2" font-size="7.1" fill="#2a2a2a" stroke="#2a2a2a" stroke-width="0.15" xml:space="preserve">Constants declared</text>
<text x="189.3" y="430.0" font-size="7.1" fill="#2a2a2a" stroke="#2a2a2a" stroke-width="0.15" xml:space="preserve">Font 0 – home small text</text>
<text x="314.3" y="430.0" font-size="7.1" fill="#2a2a2a" stroke="#2a2a2a" stroke-width="0.15" xml:space="preserve">Arial Bold 14</text>
<text x="377.1" y="430.0" font-size="7.1" fill="#2a2a2a" stroke="#2a2a2a" stroke-width="0.15" xml:space="preserve">Arialbold14</text>
<text x="189.3" y="439.8" font-size="7.1" fill="#2a2a2a" stroke="#2a2a2a" stroke-width="0.15" xml:space="preserve">Font 1 – Home temp only</text>
<text x="314.3" y="439.8" font-size="7.1" fill="#2a2a2a" stroke="#2a2a2a" stroke-width="0.15" xml:space="preserve">Arial 48 (numbers)</text>
<text x="377.1" y="439.8" font-size="7.1" fill="#2a2a2a" stroke="#2a2a2a" stroke-width="0.15" xml:space="preserve">Arial48</text>
<text x="189.3" y="449.1" font-size="7.1" fill="#2a2a2a" stroke="#2a2a2a" stroke-width="0.15" xml:space="preserve">Font 2 – main menu parameter text</text>
<text x="314.3" y="449.1" font-size="7.1" fill="#2a2a2a" stroke="#2a2a2a" stroke-width="0.15" xml:space="preserve">Arial 24</text>
<text x="377.1" y="449.1" font-size="7.1" fill="#2a2a2a" stroke="#2a2a2a" stroke-width="0.15" xml:space="preserve">Arial24</text>
<text x="189.3" y="458.9" font-size="7.1" fill="#2a2a2a" stroke="#2a2a2a" stroke-width="0.15" xml:space="preserve">Font 3   button and heading text</text>
<text x="314.3" y="458.9" font-size="7.1" fill="#2a2a2a" stroke="#2a2a2a" stroke-width="0.15" xml:space="preserve">Calibri 24</text>
<text x="377.1" y="458.9" font-size="7.1" fill="#2a2a2a" stroke="#2a2a2a" stroke-width="0.15" xml:space="preserve">Calibri24</text>
<text x="189.3" y="497.0" font-size="7.1" fill="#2a2a2a" stroke="#2a2a2a" stroke-width="0.15" xml:space="preserve">Object themes</text>
<text x="189.3" y="506.8" font-size="7.1" fill="#2a2a2a" stroke="#2a2a2a" stroke-width="0.15" xml:space="preserve">ObjectTheme 0</text>
<text x="251.5" y="506.8" font-size="7.1" fill="#2a2a2a" stroke="#2a2a2a" stroke-width="0.15" xml:space="preserve">Foreground DimGold, Background White</text>
<text x="189.3" y="516.0" font-size="7.1" fill="#2a2a2a" stroke="#2a2a2a" stroke-width="0.15" xml:space="preserve">ObjectTheme 1</text>
<text x="251.5" y="516.0" font-size="7.1" fill="#2a2a2a" stroke="#2a2a2a" stroke-width="0.15" xml:space="preserve">Foreground Gold, Background Brown</text>
<text x="189.3" y="535.1" font-size="7.1" fill="#2a2a2a" stroke="#2a2a2a" stroke-width="0.15" xml:space="preserve">Widget themes</text>
<text x="189.3" y="544.9" font-size="7.1" fill="#2a2a2a" stroke="#2a2a2a" stroke-width="0.15" xml:space="preserve">Widget Theme 0</text>
<text x="251.5" y="544.9" font-size="7.1" fill="#2a2a2a" stroke="#2a2a2a" stroke-width="0.15" xml:space="preserve">Foreground DimGold, Background?? Highlight ?? Lowlight??</text>
<text x="189.3" y="564.2" font-size="7.1" fill="#2a2a2a" stroke="#2a2a2a" stroke-width="0.15" xml:space="preserve">Bitmaps</text>
<text x="189.3" y="573.8" font-size="7.1" fill="#2a2a2a" stroke="#2a2a2a" stroke-width="0.15" xml:space="preserve">0</text>
<text x="220.2" y="573.8" font-size="7.1" fill="#2a2a2a" stroke="#2a2a2a" stroke-width="0.15" xml:space="preserve">Vacant</text>
<text x="189.3" y="583.0" font-size="7.1" fill="#2a2a2a" stroke="#2a2a2a" stroke-width="0.15" xml:space="preserve">1</text>
<text x="220.2" y="583.0" font-size="7.1" fill="#2a2a2a" stroke="#2a2a2a" stroke-width="0.15" xml:space="preserve">menubutton</text>
<text x="189.3" y="592.8" font-size="7.1" fill="#2a2a2a" stroke="#2a2a2a" stroke-width="0.15" xml:space="preserve">2</text>
<text x="220.2" y="592.8" font-size="7.1" fill="#2a2a2a" stroke="#2a2a2a" stroke-width="0.15" xml:space="preserve">Home button</text>
<text x="189.3" y="602.3" font-size="7.1" fill="#2a2a2a" stroke="#2a2a2a" stroke-width="0.15" xml:space="preserve">3</text>
<text x="220.2" y="602.3" font-size="7.1" fill="#2a2a2a" stroke="#2a2a2a" stroke-width="0.15" xml:space="preserve">Left</text>
<text x="189.3" y="611.8" font-size="7.1" fill="#2a2a2a" stroke="#2a2a2a" stroke-width="0.15" xml:space="preserve">4</text>
<text x="220.2" y="611.8" font-size="7.1" fill="#2a2a2a" stroke="#2a2a2a" stroke-width="0.15" xml:space="preserve">right</text>
<text x="189.3" y="621.3" font-size="7.1" fill="#2a2a2a" stroke="#2a2a2a" stroke-width="0.15" xml:space="preserve">5</text>
<text x="220.2" y="621.3" font-size="7.1" fill="#2a2a2a" stroke="#2a2a2a" stroke-width="0.15" xml:space="preserve">up</text>
<text x="189.3" y="630.8" font-size="7.1" fill="#2a2a2a" stroke="#2a2a2a" stroke-width="0.15" xml:space="preserve">6</text>
<text x="220.2" y="630.8" font-size="7.1" fill="#2a2a2a" stroke="#2a2a2a" stroke-width="0.15" xml:space="preserve">down</text>
<text x="189.3" y="640.7" font-size="7.1" fill="#2a2a2a" stroke="#2a2a2a" stroke-width="0.15" xml:space="preserve">7</text>
<text x="220.2" y="640.7" font-size="7.1" fill="#2a2a2a" stroke="#2a2a2a" stroke-width="0.15" xml:space="preserve">left top for main display</text>
<circle cx="195" cy="190" r="12.5" fill="url(#gb)" stroke="#8a8a9a" stroke-width="0.8"/>
<rect x="189.29" y="184.05" width="11.67" height="12.62" fill="#2b2b2b"/>
<path d="M189.29 196.67 L189.29 194.77 L193.02 190.61 L195.12 193.13 L197.45 188.09 L200.95 195.15 L200.95 196.67Z" fill="#8cd03c"/>
<path d="M190.22 185.56 L192.20 188.84 L193.72 187.83 L195.12 190.36 L196.52 193.89 L198.04 190.99 L200.37 193.13" fill="none" stroke="#e82a10" stroke-width="1.07" stroke-dasharray="1.90 0.60"/>
<rect x="189.29" y="184.05" width="11.67" height="12.62" fill="none" stroke="#5a5a6a" stroke-width="0.60"/>
<rect x="518" y="59" width="489" height="575" fill="#999999"/>
<rect x="518" y="59" width="489" height="1" fill="#5a5a5a"/>
<rect x="518" y="59" width="1" height="575" fill="#5a5a5a"/>
<text x="540.3" y="76.8" font-size="9.8" fill="#141414" stroke="#141414" stroke-width="0.2" textLength="53.8" lengthAdjust="spacingAndGlyphs">Design brief</text>
<rect x="526.3" y="86.6" width="229" height="175.4" fill="#fff"/>
<line x1="554.20" y1="107.90" x2="554.20" y2="114.90" stroke="#849292" stroke-width="1"/>
<line x1="554.20" y1="228.82" x2="554.20" y2="235.82" stroke="#849292" stroke-width="1"/>
<text transform="translate(556.70,106.40) rotate(-90)" font-size="7" fill="#c2c2c2">0</text>
<text transform="translate(558.00,239.32) rotate(-90)" font-size="7" fill="#c2c2c2" text-anchor="end">0</text>
<line x1="572.06" y1="107.90" x2="572.06" y2="114.90" stroke="#849292" stroke-width="1"/>
<line x1="572.06" y1="228.82" x2="572.06" y2="235.82" stroke="#849292" stroke-width="1"/>
<text transform="translate(574.56,106.40) rotate(-90)" font-size="7" fill="#c2c2c2">50</text>
<text transform="translate(575.86,239.32) rotate(-90)" font-size="7" fill="#c2c2c2" text-anchor="end">50</text>
<line x1="589.92" y1="107.90" x2="589.92" y2="114.90" stroke="#849292" stroke-width="1"/>
<line x1="589.92" y1="228.82" x2="589.92" y2="235.82" stroke="#849292" stroke-width="1"/>
<text transform="translate(592.42,106.40) rotate(-90)" font-size="7" fill="#c2c2c2">100</text>
<text transform="translate(593.72,239.32) rotate(-90)" font-size="7" fill="#c2c2c2" text-anchor="end">100</text>
<line x1="607.78" y1="107.90" x2="607.78" y2="114.90" stroke="#849292" stroke-width="1"/>
<line x1="607.78" y1="228.82" x2="607.78" y2="235.82" stroke="#849292" stroke-width="1"/>
<text transform="translate(610.28,106.40) rotate(-90)" font-size="7" fill="#c2c2c2">150</text>
<text transform="translate(611.58,239.32) rotate(-90)" font-size="7" fill="#c2c2c2" text-anchor="end">150</text>
<line x1="625.64" y1="107.90" x2="625.64" y2="114.90" stroke="#849292" stroke-width="1"/>
<line x1="625.64" y1="228.82" x2="625.64" y2="235.82" stroke="#849292" stroke-width="1"/>
<text transform="translate(628.14,106.40) rotate(-90)" font-size="7" fill="#c2c2c2">200</text>
<text transform="translate(629.44,239.32) rotate(-90)" font-size="7" fill="#c2c2c2" text-anchor="end">200</text>
<line x1="643.50" y1="107.90" x2="643.50" y2="114.90" stroke="#849292" stroke-width="1"/>
<line x1="643.50" y1="228.82" x2="643.50" y2="235.82" stroke="#849292" stroke-width="1"/>
<text transform="translate(646.00,106.40) rotate(-90)" font-size="7" fill="#c2c2c2">250</text>
<text transform="translate(647.30,239.32) rotate(-90)" font-size="7" fill="#c2c2c2" text-anchor="end">250</text>
<line x1="661.36" y1="107.90" x2="661.36" y2="114.90" stroke="#849292" stroke-width="1"/>
<line x1="661.36" y1="228.82" x2="661.36" y2="235.82" stroke="#849292" stroke-width="1"/>
<text transform="translate(663.86,106.40) rotate(-90)" font-size="7" fill="#c2c2c2">300</text>
<text transform="translate(665.16,239.32) rotate(-90)" font-size="7" fill="#c2c2c2" text-anchor="end">300</text>
<line x1="679.22" y1="107.90" x2="679.22" y2="114.90" stroke="#849292" stroke-width="1"/>
<line x1="679.22" y1="228.82" x2="679.22" y2="235.82" stroke="#849292" stroke-width="1"/>
<text transform="translate(681.72,106.40) rotate(-90)" font-size="7" fill="#c2c2c2">350</text>
<text transform="translate(683.02,239.32) rotate(-90)" font-size="7" fill="#c2c2c2" text-anchor="end">350</text>
<line x1="697.08" y1="107.90" x2="697.08" y2="114.90" stroke="#849292" stroke-width="1"/>
<line x1="697.08" y1="228.82" x2="697.08" y2="235.82" stroke="#849292" stroke-width="1"/>
<text transform="translate(699.58,106.40) rotate(-90)" font-size="7" fill="#c2c2c2">400</text>
<text transform="translate(700.88,239.32) rotate(-90)" font-size="7" fill="#c2c2c2" text-anchor="end">400</text>
<line x1="714.94" y1="107.90" x2="714.94" y2="114.90" stroke="#849292" stroke-width="1"/>
<line x1="714.94" y1="228.82" x2="714.94" y2="235.82" stroke="#849292" stroke-width="1"/>
<text transform="translate(717.44,106.40) rotate(-90)" font-size="7" fill="#c2c2c2">450</text>
<text transform="translate(718.74,239.32) rotate(-90)" font-size="7" fill="#c2c2c2" text-anchor="end">450</text>
<line x1="547.20" y1="115.30" x2="554.20" y2="115.30" stroke="#849292" stroke-width="1"/>
<line x1="725.08" y1="115.30" x2="733.58" y2="115.30" stroke="#849292" stroke-width="1"/>
<text x="546.20" y="117.80" font-size="7" fill="#c2c2c2" text-anchor="end">0</text>
<text x="734.58" y="117.80" font-size="7" fill="#c2c2c2">0</text>
<line x1="547.20" y1="133.16" x2="554.20" y2="133.16" stroke="#849292" stroke-width="1"/>
<line x1="725.08" y1="133.16" x2="733.58" y2="133.16" stroke="#849292" stroke-width="1"/>
<text x="546.20" y="135.66" font-size="7" fill="#c2c2c2" text-anchor="end">50</text>
<text x="734.58" y="135.66" font-size="7" fill="#c2c2c2">50</text>
<line x1="547.20" y1="151.02" x2="554.20" y2="151.02" stroke="#849292" stroke-width="1"/>
<line x1="725.08" y1="151.02" x2="733.58" y2="151.02" stroke="#849292" stroke-width="1"/>
<text x="546.20" y="153.52" font-size="7" fill="#c2c2c2" text-anchor="end">100</text>
<text x="734.58" y="153.52" font-size="7" fill="#c2c2c2">100</text>
<line x1="547.20" y1="168.88" x2="554.20" y2="168.88" stroke="#849292" stroke-width="1"/>
<line x1="725.08" y1="168.88" x2="733.58" y2="168.88" stroke="#849292" stroke-width="1"/>
<text x="546.20" y="171.38" font-size="7" fill="#c2c2c2" text-anchor="end">150</text>
<text x="734.58" y="171.38" font-size="7" fill="#c2c2c2">150</text>
<line x1="547.20" y1="186.74" x2="554.20" y2="186.74" stroke="#849292" stroke-width="1"/>
<line x1="725.08" y1="186.74" x2="733.58" y2="186.74" stroke="#849292" stroke-width="1"/>
<text x="546.20" y="189.24" font-size="7" fill="#c2c2c2" text-anchor="end">200</text>
<text x="734.58" y="189.24" font-size="7" fill="#c2c2c2">200</text>
<line x1="547.20" y1="204.60" x2="554.20" y2="204.60" stroke="#849292" stroke-width="1"/>
<line x1="725.08" y1="204.60" x2="733.58" y2="204.60" stroke="#849292" stroke-width="1"/>
<text x="546.20" y="207.10" font-size="7" fill="#c2c2c2" text-anchor="end">250</text>
<text x="734.58" y="207.10" font-size="7" fill="#c2c2c2">250</text>
<line x1="547.20" y1="222.46" x2="554.20" y2="222.46" stroke="#849292" stroke-width="1"/>
<line x1="725.08" y1="222.46" x2="733.58" y2="222.46" stroke="#849292" stroke-width="1"/>
<text x="546.20" y="224.96" font-size="7" fill="#c2c2c2" text-anchor="end">300</text>
<text x="734.58" y="224.96" font-size="7" fill="#c2c2c2">300</text>
<rect x="554.20" y="114.90" width="170.88" height="113.92" fill="none" stroke="#849292" stroke-width="1.2"/>
<g transform="translate(554.20,114.90) scale(0.356)">
<rect x="0" y="0" width="480" height="320" fill="#4a4a4a"/>
<rect x="0" y="0" width="480" height="68" fill="#606062"/>
<rect x="0" y="68" width="480" height="3.5" fill="#ffcc29"/>
<rect x="108.5" y="0" width="3.5" height="68" fill="#ffcc29"/>
<rect x="237" y="0" width="3.5" height="68" fill="#ffcc29"/>
<rect x="358" y="0" width="3.5" height="68" fill="#ffcc29"/>
<text x="54" y="15" font-size="17" fill="#9e890f" text-anchor="middle" font-weight="bold">time</text>
<text x="54" y="56.5" font-size="36.5" fill="#ffcc29" text-anchor="middle" font-weight="bold">18:32</text>
<text x="174" y="15" font-size="17" fill="#9e890f" text-anchor="middle" font-weight="bold">pressure</text>
<text x="174" y="56.5" font-size="36.5" fill="#ffcc29" text-anchor="middle" font-weight="bold">1012</text>
<text x="298" y="15" font-size="17" fill="#9e890f" text-anchor="middle" font-weight="bold">humidity</text>
<text x="298" y="56.5" font-size="36.5" fill="#ffcc29" text-anchor="middle" font-weight="bold">32%</text>
<text x="420" y="15" font-size="17" fill="#9e890f" text-anchor="middle" font-weight="bold">heater</text>
<text x="420" y="56.5" font-size="35" fill="#ffcc29" text-anchor="middle" font-weight="normal">ON</text>
<text x="230" y="177.8" font-size="86" fill="#ffcc29" text-anchor="middle" font-weight="bold">18C</text>
<circle cx="401.6" cy="150.5" r="18" fill="none" stroke="#ffcc29" stroke-width="5"/>
<line x1="428.6" y1="150.5" x2="439.6" y2="150.5" stroke="#ffcc29" stroke-width="5"/>
<line x1="420.7" y1="169.6" x2="428.5" y2="177.4" stroke="#ffcc29" stroke-width="5"/>
<line x1="401.6" y1="177.5" x2="401.6" y2="188.5" stroke="#ffcc29" stroke-width="5"/>
<line x1="382.5" y1="169.6" x2="374.7" y2="177.4" stroke="#ffcc29" stroke-width="5"/>
<line x1="374.6" y1="150.5" x2="363.6" y2="150.5" stroke="#ffcc29" stroke-width="5"/>
<line x1="382.5" y1="131.4" x2="374.7" y2="123.6" stroke="#ffcc29" stroke-width="5"/>
<line x1="401.6" y1="123.5" x2="401.6" y2="112.5" stroke="#ffcc29" stroke-width="5"/>
<line x1="420.7" y1="131.4" x2="428.5" y2="123.6" stroke="#ffcc29" stroke-width="5"/>
<line x1="112.6" y1="209" x2="112.6" y2="289" stroke="#9e890f" stroke-width="2.2"/>
<line x1="132.8" y1="209" x2="132.8" y2="289" stroke="#9e890f" stroke-width="2.2"/>
<line x1="153.0" y1="209" x2="153.0" y2="289" stroke="#9e890f" stroke-width="2.2"/>
<line x1="173.2" y1="209" x2="173.2" y2="289" stroke="#9e890f" stroke-width="2.2"/>
<line x1="193.4" y1="209" x2="193.4" y2="289" stroke="#9e890f" stroke-width="2.2"/>
<line x1="213.6" y1="209" x2="213.6" y2="289" stroke="#9e890f" stroke-width="2.2"/>
<line x1="233.8" y1="209" x2="233.8" y2="289" stroke="#9e890f" stroke-width="2.2"/>
<line x1="254.0" y1="209" x2="254.0" y2="289" stroke="#9e890f" stroke-width="2.2"/>
<line x1="274.2" y1="209" x2="274.2" y2="289" stroke="#9e890f" stroke-width="2.2"/>
<line x1="294.4" y1="209" x2="294.4" y2="289" stroke="#9e890f" stroke-width="2.2"/>
<line x1="314.6" y1="209" x2="314.6" y2="289" stroke="#9e890f" stroke-width="2.2"/>
<line x1="334.8" y1="209" x2="334.8" y2="289" stroke="#9e890f" stroke-width="2.2"/>
<line x1="355.0" y1="209" x2="355.0" y2="289" stroke="#9e890f" stroke-width="2.2"/>
<line x1="112.6" y1="209.0" x2="355" y2="209.0" stroke="#9e890f" stroke-width="2.2"/>
<line x1="112.6" y1="229.0" x2="355" y2="229.0" stroke="#9e890f" stroke-width="2.2"/>
<line x1="112.6" y1="249.0" x2="355" y2="249.0" stroke="#9e890f" stroke-width="2.2"/>
<line x1="112.6" y1="269.0" x2="355" y2="269.0" stroke="#9e890f" stroke-width="2.2"/>
<line x1="112.6" y1="289.0" x2="355" y2="289.0" stroke="#9e890f" stroke-width="2.2"/>
<text x="112" y="220" font-size="17" fill="#9e890f" text-anchor="end" font-weight="normal">20</text>
<text x="112" y="295" font-size="17" fill="#9e890f" text-anchor="end" font-weight="normal">0</text>
<text x="119" y="309" font-size="17" fill="#9e890f" text-anchor="middle" font-weight="normal">0</text>
<text x="236" y="309" font-size="17" fill="#9e890f" text-anchor="middle" font-weight="normal">12</text>
<text x="357" y="309" font-size="17" fill="#9e890f" text-anchor="middle" font-weight="normal">24</text>
<polyline points="112.6,268.8 125.6,262.6 137.9,248.3 154.2,235.1 170.5,232 182.9,237.9 194.9,248.3 207.3,253.1 219.7,250.3 236,237.9 248.3,228.9 264.6,229.8 276.7,232.6 293.3,225.3 317.7,227 332,228.7" fill="none" stroke="#e8358c" stroke-width="4.5" stroke-linejoin="round"/>
<rect x="409" y="262" width="60.5" height="49" rx="9" fill="#665412"/>
<rect x="419" y="268.5" width="40" height="5" fill="#ffcc29"/>
<rect x="419" y="279.0" width="40" height="5" fill="#ffcc29"/>
<rect x="419" y="288.5" width="40" height="5" fill="#ffcc29"/>
<rect x="419" y="298.5" width="40" height="5" fill="#ffcc29"/>
</g>
<rect x="764.1" y="86.6" width="229" height="175.4" fill="#fff"/>
<line x1="793.00" y1="108.90" x2="793.00" y2="115.90" stroke="#849292" stroke-width="1"/>
<line x1="793.00" y1="229.82" x2="793.00" y2="236.82" stroke="#849292" stroke-width="1"/>
<text transform="translate(795.50,107.40) rotate(-90)" font-size="7" fill="#c2c2c2">0</text>
<text transform="translate(796.80,240.32) rotate(-90)" font-size="7" fill="#c2c2c2" text-anchor="end">0</text>
<line x1="810.86" y1="108.90" x2="810.86" y2="115.90" stroke="#849292" stroke-width="1"/>
<line x1="810.86" y1="229.82" x2="810.86" y2="236.82" stroke="#849292" stroke-width="1"/>
<text transform="translate(813.36,107.40) rotate(-90)" font-size="7" fill="#c2c2c2">50</text>
<text transform="translate(814.66,240.32) rotate(-90)" font-size="7" fill="#c2c2c2" text-anchor="end">50</text>
<line x1="828.72" y1="108.90" x2="828.72" y2="115.90" stroke="#849292" stroke-width="1"/>
<line x1="828.72" y1="229.82" x2="828.72" y2="236.82" stroke="#849292" stroke-width="1"/>
<text transform="translate(831.22,107.40) rotate(-90)" font-size="7" fill="#c2c2c2">100</text>
<text transform="translate(832.52,240.32) rotate(-90)" font-size="7" fill="#c2c2c2" text-anchor="end">100</text>
<line x1="846.58" y1="108.90" x2="846.58" y2="115.90" stroke="#849292" stroke-width="1"/>
<line x1="846.58" y1="229.82" x2="846.58" y2="236.82" stroke="#849292" stroke-width="1"/>
<text transform="translate(849.08,107.40) rotate(-90)" font-size="7" fill="#c2c2c2">150</text>
<text transform="translate(850.38,240.32) rotate(-90)" font-size="7" fill="#c2c2c2" text-anchor="end">150</text>
<line x1="864.44" y1="108.90" x2="864.44" y2="115.90" stroke="#849292" stroke-width="1"/>
<line x1="864.44" y1="229.82" x2="864.44" y2="236.82" stroke="#849292" stroke-width="1"/>
<text transform="translate(866.94,107.40) rotate(-90)" font-size="7" fill="#c2c2c2">200</text>
<text transform="translate(868.24,240.32) rotate(-90)" font-size="7" fill="#c2c2c2" text-anchor="end">200</text>
<line x1="882.30" y1="108.90" x2="882.30" y2="115.90" stroke="#849292" stroke-width="1"/>
<line x1="882.30" y1="229.82" x2="882.30" y2="236.82" stroke="#849292" stroke-width="1"/>
<text transform="translate(884.80,107.40) rotate(-90)" font-size="7" fill="#c2c2c2">250</text>
<text transform="translate(886.10,240.32) rotate(-90)" font-size="7" fill="#c2c2c2" text-anchor="end">250</text>
<line x1="900.16" y1="108.90" x2="900.16" y2="115.90" stroke="#849292" stroke-width="1"/>
<line x1="900.16" y1="229.82" x2="900.16" y2="236.82" stroke="#849292" stroke-width="1"/>
<text transform="translate(902.66,107.40) rotate(-90)" font-size="7" fill="#c2c2c2">300</text>
<text transform="translate(903.96,240.32) rotate(-90)" font-size="7" fill="#c2c2c2" text-anchor="end">300</text>
<line x1="918.02" y1="108.90" x2="918.02" y2="115.90" stroke="#849292" stroke-width="1"/>
<line x1="918.02" y1="229.82" x2="918.02" y2="236.82" stroke="#849292" stroke-width="1"/>
<text transform="translate(920.52,107.40) rotate(-90)" font-size="7" fill="#c2c2c2">350</text>
<text transform="translate(921.82,240.32) rotate(-90)" font-size="7" fill="#c2c2c2" text-anchor="end">350</text>
<line x1="935.88" y1="108.90" x2="935.88" y2="115.90" stroke="#849292" stroke-width="1"/>
<line x1="935.88" y1="229.82" x2="935.88" y2="236.82" stroke="#849292" stroke-width="1"/>
<text transform="translate(938.38,107.40) rotate(-90)" font-size="7" fill="#c2c2c2">400</text>
<text transform="translate(939.68,240.32) rotate(-90)" font-size="7" fill="#c2c2c2" text-anchor="end">400</text>
<line x1="953.74" y1="108.90" x2="953.74" y2="115.90" stroke="#849292" stroke-width="1"/>
<line x1="953.74" y1="229.82" x2="953.74" y2="236.82" stroke="#849292" stroke-width="1"/>
<text transform="translate(956.24,107.40) rotate(-90)" font-size="7" fill="#c2c2c2">450</text>
<text transform="translate(957.54,240.32) rotate(-90)" font-size="7" fill="#c2c2c2" text-anchor="end">450</text>
<line x1="786.00" y1="116.30" x2="793.00" y2="116.30" stroke="#849292" stroke-width="1"/>
<line x1="963.88" y1="116.30" x2="972.38" y2="116.30" stroke="#849292" stroke-width="1"/>
<text x="785.00" y="118.80" font-size="7" fill="#c2c2c2" text-anchor="end">0</text>
<text x="973.38" y="118.80" font-size="7" fill="#c2c2c2">0</text>
<line x1="786.00" y1="134.16" x2="793.00" y2="134.16" stroke="#849292" stroke-width="1"/>
<line x1="963.88" y1="134.16" x2="972.38" y2="134.16" stroke="#849292" stroke-width="1"/>
<text x="785.00" y="136.66" font-size="7" fill="#c2c2c2" text-anchor="end">50</text>
<text x="973.38" y="136.66" font-size="7" fill="#c2c2c2">50</text>
<line x1="786.00" y1="152.02" x2="793.00" y2="152.02" stroke="#849292" stroke-width="1"/>
<line x1="963.88" y1="152.02" x2="972.38" y2="152.02" stroke="#849292" stroke-width="1"/>
<text x="785.00" y="154.52" font-size="7" fill="#c2c2c2" text-anchor="end">100</text>
<text x="973.38" y="154.52" font-size="7" fill="#c2c2c2">100</text>
<line x1="786.00" y1="169.88" x2="793.00" y2="169.88" stroke="#849292" stroke-width="1"/>
<line x1="963.88" y1="169.88" x2="972.38" y2="169.88" stroke="#849292" stroke-width="1"/>
<text x="785.00" y="172.38" font-size="7" fill="#c2c2c2" text-anchor="end">150</text>
<text x="973.38" y="172.38" font-size="7" fill="#c2c2c2">150</text>
<line x1="786.00" y1="187.74" x2="793.00" y2="187.74" stroke="#849292" stroke-width="1"/>
<line x1="963.88" y1="187.74" x2="972.38" y2="187.74" stroke="#849292" stroke-width="1"/>
<text x="785.00" y="190.24" font-size="7" fill="#c2c2c2" text-anchor="end">200</text>
<text x="973.38" y="190.24" font-size="7" fill="#c2c2c2">200</text>
<line x1="786.00" y1="205.60" x2="793.00" y2="205.60" stroke="#849292" stroke-width="1"/>
<line x1="963.88" y1="205.60" x2="972.38" y2="205.60" stroke="#849292" stroke-width="1"/>
<text x="785.00" y="208.10" font-size="7" fill="#c2c2c2" text-anchor="end">250</text>
<text x="973.38" y="208.10" font-size="7" fill="#c2c2c2">250</text>
<line x1="786.00" y1="223.46" x2="793.00" y2="223.46" stroke="#849292" stroke-width="1"/>
<line x1="963.88" y1="223.46" x2="972.38" y2="223.46" stroke="#849292" stroke-width="1"/>
<text x="785.00" y="225.96" font-size="7" fill="#c2c2c2" text-anchor="end">300</text>
<text x="973.38" y="225.96" font-size="7" fill="#c2c2c2">300</text>
<rect x="793.00" y="115.90" width="170.88" height="113.92" fill="none" stroke="#849292" stroke-width="1.2"/>
<g transform="translate(793.00,115.90) scale(0.356)">
<rect x="0" y="0" width="480" height="320" fill="#4a4a4a"/>
<path d="M8 24.4 H40 M26 9.899999999999999 L11 24.4 L26 38.9" fill="none" stroke="#ffcc29" stroke-width="5.5"/>
<text x="240" y="33" font-size="31.5" fill="#ffcc29" text-anchor="middle" font-weight="bold">SET DATE</text>
<path d="M435 28 V42 H444 V32 H452 V42 H462 V28 L448 16.5Z" fill="#ffcc29"/>
<path d="M430 26 L448 10 L466 26" fill="none" stroke="#ffcc29" stroke-width="5"/>
<rect x="454" y="8" width="6.5" height="12" fill="#ffcc29"/>
<rect x="39.3" y="59.6" width="61.8" height="51.1" rx="8" fill="#665412"/>
<path d="M69.19999999999999 101 V73 M54.69999999999999 86.5 L69.19999999999999 72 L83.69999999999999 86.5" fill="none" stroke="#ffcc29" stroke-width="6.2" stroke-linejoin="miter"/>
<rect x="39.3" y="233.4" width="61.8" height="51.099999999999994" rx="8" fill="#665412"/>
<path d="M69.19999999999999 247 V275 M54.69999999999999 261.5 L69.19999999999999 276 L83.69999999999999 261.5" fill="none" stroke="#ffcc29" stroke-width="6.2" stroke-linejoin="miter"/>
<rect x="160" y="59.6" width="60.80000000000001" height="51.1" rx="8" fill="#665412"/>
<path d="M189.4 101 V73 M174.9 86.5 L189.4 72 L203.9 86.5" fill="none" stroke="#ffcc29" stroke-width="6.2" stroke-linejoin="miter"/>
<rect x="160" y="233.4" width="60.80000000000001" height="51.099999999999994" rx="8" fill="#665412"/>
<path d="M189.4 247 V275 M174.9 261.5 L189.4 276 L203.9 261.5" fill="none" stroke="#ffcc29" stroke-width="6.2" stroke-linejoin="miter"/>
<rect x="329.2" y="59.6" width="61.80000000000001" height="51.1" rx="8" fill="#665412"/>
<path d="M359.1 101 V73 M344.6 86.5 L359.1 72 L373.6 86.5" fill="none" stroke="#ffcc29" stroke-width="6.2" stroke-linejoin="miter"/>
<rect x="329.2" y="233.4" width="61.80000000000001" height="51.099999999999994" rx="8" fill="#665412"/>
<path d="M359.1 247 V275 M344.6 261.5 L359.1 276 L373.6 261.5" fill="none" stroke="#ffcc29" stroke-width="6.2" stroke-linejoin="miter"/>
<text x="239.5" y="197.5" font-size="84" fill="#ffcc29" text-anchor="middle" font-weight="bold">11 06 2024</text>
</g>
<rect x="526.3" y="269" width="229" height="175.4" fill="#fff"/>
<line x1="554.90" y1="290.60" x2="554.90" y2="297.60" stroke="#849292" stroke-width="1"/>
<line x1="554.90" y1="411.52" x2="554.90" y2="418.52" stroke="#849292" stroke-width="1"/>
<text transform="translate(557.40,289.10) rotate(-90)" font-size="7" fill="#c2c2c2">0</text>
<text transform="translate(558.70,422.02) rotate(-90)" font-size="7" fill="#c2c2c2" text-anchor="end">0</text>
<line x1="572.76" y1="290.60" x2="572.76" y2="297.60" stroke="#849292" stroke-width="1"/>
<line x1="572.76" y1="411.52" x2="572.76" y2="418.52" stroke="#849292" stroke-width="1"/>
<text transform="translate(575.26,289.10) rotate(-90)" font-size="7" fill="#c2c2c2">50</text>
<text transform="translate(576.56,422.02) rotate(-90)" font-size="7" fill="#c2c2c2" text-anchor="end">50</text>
<line x1="590.62" y1="290.60" x2="590.62" y2="297.60" stroke="#849292" stroke-width="1"/>
<line x1="590.62" y1="411.52" x2="590.62" y2="418.52" stroke="#849292" stroke-width="1"/>
<text transform="translate(593.12,289.10) rotate(-90)" font-size="7" fill="#c2c2c2">100</text>
<text transform="translate(594.42,422.02) rotate(-90)" font-size="7" fill="#c2c2c2" text-anchor="end">100</text>
<line x1="608.48" y1="290.60" x2="608.48" y2="297.60" stroke="#849292" stroke-width="1"/>
<line x1="608.48" y1="411.52" x2="608.48" y2="418.52" stroke="#849292" stroke-width="1"/>
<text transform="translate(610.98,289.10) rotate(-90)" font-size="7" fill="#c2c2c2">150</text>
<text transform="translate(612.28,422.02) rotate(-90)" font-size="7" fill="#c2c2c2" text-anchor="end">150</text>
<line x1="626.34" y1="290.60" x2="626.34" y2="297.60" stroke="#849292" stroke-width="1"/>
<line x1="626.34" y1="411.52" x2="626.34" y2="418.52" stroke="#849292" stroke-width="1"/>
<text transform="translate(628.84,289.10) rotate(-90)" font-size="7" fill="#c2c2c2">200</text>
<text transform="translate(630.14,422.02) rotate(-90)" font-size="7" fill="#c2c2c2" text-anchor="end">200</text>
<line x1="644.20" y1="290.60" x2="644.20" y2="297.60" stroke="#849292" stroke-width="1"/>
<line x1="644.20" y1="411.52" x2="644.20" y2="418.52" stroke="#849292" stroke-width="1"/>
<text transform="translate(646.70,289.10) rotate(-90)" font-size="7" fill="#c2c2c2">250</text>
<text transform="translate(648.00,422.02) rotate(-90)" font-size="7" fill="#c2c2c2" text-anchor="end">250</text>
<line x1="662.06" y1="290.60" x2="662.06" y2="297.60" stroke="#849292" stroke-width="1"/>
<line x1="662.06" y1="411.52" x2="662.06" y2="418.52" stroke="#849292" stroke-width="1"/>
<text transform="translate(664.56,289.10) rotate(-90)" font-size="7" fill="#c2c2c2">300</text>
<text transform="translate(665.86,422.02) rotate(-90)" font-size="7" fill="#c2c2c2" text-anchor="end">300</text>
<line x1="679.92" y1="290.60" x2="679.92" y2="297.60" stroke="#849292" stroke-width="1"/>
<line x1="679.92" y1="411.52" x2="679.92" y2="418.52" stroke="#849292" stroke-width="1"/>
<text transform="translate(682.42,289.10) rotate(-90)" font-size="7" fill="#c2c2c2">350</text>
<text transform="translate(683.72,422.02) rotate(-90)" font-size="7" fill="#c2c2c2" text-anchor="end">350</text>
<line x1="697.78" y1="290.60" x2="697.78" y2="297.60" stroke="#849292" stroke-width="1"/>
<line x1="697.78" y1="411.52" x2="697.78" y2="418.52" stroke="#849292" stroke-width="1"/>
<text transform="translate(700.28,289.10) rotate(-90)" font-size="7" fill="#c2c2c2">400</text>
<text transform="translate(701.58,422.02) rotate(-90)" font-size="7" fill="#c2c2c2" text-anchor="end">400</text>
<line x1="715.64" y1="290.60" x2="715.64" y2="297.60" stroke="#849292" stroke-width="1"/>
<line x1="715.64" y1="411.52" x2="715.64" y2="418.52" stroke="#849292" stroke-width="1"/>
<text transform="translate(718.14,289.10) rotate(-90)" font-size="7" fill="#c2c2c2">450</text>
<text transform="translate(719.44,422.02) rotate(-90)" font-size="7" fill="#c2c2c2" text-anchor="end">450</text>
<line x1="547.90" y1="298.00" x2="554.90" y2="298.00" stroke="#849292" stroke-width="1"/>
<line x1="725.78" y1="298.00" x2="734.28" y2="298.00" stroke="#849292" stroke-width="1"/>
<text x="546.90" y="300.50" font-size="7" fill="#c2c2c2" text-anchor="end">0</text>
<text x="735.28" y="300.50" font-size="7" fill="#c2c2c2">0</text>
<line x1="547.90" y1="315.86" x2="554.90" y2="315.86" stroke="#849292" stroke-width="1"/>
<line x1="725.78" y1="315.86" x2="734.28" y2="315.86" stroke="#849292" stroke-width="1"/>
<text x="546.90" y="318.36" font-size="7" fill="#c2c2c2" text-anchor="end">50</text>
<text x="735.28" y="318.36" font-size="7" fill="#c2c2c2">50</text>
<line x1="547.90" y1="333.72" x2="554.90" y2="333.72" stroke="#849292" stroke-width="1"/>
<line x1="725.78" y1="333.72" x2="734.28" y2="333.72" stroke="#849292" stroke-width="1"/>
<text x="546.90" y="336.22" font-size="7" fill="#c2c2c2" text-anchor="end">100</text>
<text x="735.28" y="336.22" font-size="7" fill="#c2c2c2">100</text>
<line x1="547.90" y1="351.58" x2="554.90" y2="351.58" stroke="#849292" stroke-width="1"/>
<line x1="725.78" y1="351.58" x2="734.28" y2="351.58" stroke="#849292" stroke-width="1"/>
<text x="546.90" y="354.08" font-size="7" fill="#c2c2c2" text-anchor="end">150</text>
<text x="735.28" y="354.08" font-size="7" fill="#c2c2c2">150</text>
<line x1="547.90" y1="369.44" x2="554.90" y2="369.44" stroke="#849292" stroke-width="1"/>
<line x1="725.78" y1="369.44" x2="734.28" y2="369.44" stroke="#849292" stroke-width="1"/>
<text x="546.90" y="371.94" font-size="7" fill="#c2c2c2" text-anchor="end">200</text>
<text x="735.28" y="371.94" font-size="7" fill="#c2c2c2">200</text>
<line x1="547.90" y1="387.30" x2="554.90" y2="387.30" stroke="#849292" stroke-width="1"/>
<line x1="725.78" y1="387.30" x2="734.28" y2="387.30" stroke="#849292" stroke-width="1"/>
<text x="546.90" y="389.80" font-size="7" fill="#c2c2c2" text-anchor="end">250</text>
<text x="735.28" y="389.80" font-size="7" fill="#c2c2c2">250</text>
<line x1="547.90" y1="405.16" x2="554.90" y2="405.16" stroke="#849292" stroke-width="1"/>
<line x1="725.78" y1="405.16" x2="734.28" y2="405.16" stroke="#849292" stroke-width="1"/>
<text x="546.90" y="407.66" font-size="7" fill="#c2c2c2" text-anchor="end">300</text>
<text x="735.28" y="407.66" font-size="7" fill="#c2c2c2">300</text>
<rect x="554.90" y="297.60" width="170.88" height="113.92" fill="none" stroke="#849292" stroke-width="1.2"/>
<g transform="translate(554.90,297.60) scale(0.356)">
<rect x="0" y="0" width="480" height="320" fill="#4a4a4a"/>
<text x="244.5" y="35" font-size="31.5" fill="#ffcc29" text-anchor="middle" font-weight="bold">MENU</text>
<path d="M439 31 V45 H448 V35 H456 V45 H466 V31 L452 19.5Z" fill="#ffcc29"/>
<path d="M434 29 L452 13 L470 29" fill="none" stroke="#ffcc29" stroke-width="5"/>
<rect x="458" y="11" width="6.5" height="12" fill="#ffcc29"/>
<rect x="21.6" y="52" width="200.3" height="49" rx="9" fill="#6d6240"/>
<text x="121.8" y="85.5" font-size="31" fill="#ffcc29" text-anchor="middle" font-weight="bold">Set time</text>
<rect x="21.6" y="113" width="200.3" height="49" rx="9" fill="#665412"/>
<text x="121.8" y="146.5" font-size="31" fill="#ffcc29" text-anchor="middle" font-weight="bold">Set date</text>
<rect x="21.6" y="175" width="200.3" height="50.599999999999994" rx="9" fill="#665412"/>
<text x="121.8" y="209.3" font-size="31" fill="#ffcc29" text-anchor="middle" font-weight="bold">Program</text>
</g>
<rect x="764.1" y="269" width="229" height="175.4" fill="#fff"/>
<line x1="792.60" y1="290.60" x2="792.60" y2="297.60" stroke="#849292" stroke-width="1"/>
<line x1="792.60" y1="411.52" x2="792.60" y2="418.52" stroke="#849292" stroke-width="1"/>
<text transform="translate(795.10,289.10) rotate(-90)" font-size="7" fill="#c2c2c2">0</text>
<text transform="translate(796.40,422.02) rotate(-90)" font-size="7" fill="#c2c2c2" text-anchor="end">0</text>
<line x1="810.46" y1="290.60" x2="810.46" y2="297.60" stroke="#849292" stroke-width="1"/>
<line x1="810.46" y1="411.52" x2="810.46" y2="418.52" stroke="#849292" stroke-width="1"/>
<text transform="translate(812.96,289.10) rotate(-90)" font-size="7" fill="#c2c2c2">50</text>
<text transform="translate(814.26,422.02) rotate(-90)" font-size="7" fill="#c2c2c2" text-anchor="end">50</text>
<line x1="828.32" y1="290.60" x2="828.32" y2="297.60" stroke="#849292" stroke-width="1"/>
<line x1="828.32" y1="411.52" x2="828.32" y2="418.52" stroke="#849292" stroke-width="1"/>
<text transform="translate(830.82,289.10) rotate(-90)" font-size="7" fill="#c2c2c2">100</text>
<text transform="translate(832.12,422.02) rotate(-90)" font-size="7" fill="#c2c2c2" text-anchor="end">100</text>
<line x1="846.18" y1="290.60" x2="846.18" y2="297.60" stroke="#849292" stroke-width="1"/>
<line x1="846.18" y1="411.52" x2="846.18" y2="418.52" stroke="#849292" stroke-width="1"/>
<text transform="translate(848.68,289.10) rotate(-90)" font-size="7" fill="#c2c2c2">150</text>
<text transform="translate(849.98,422.02) rotate(-90)" font-size="7" fill="#c2c2c2" text-anchor="end">150</text>
<line x1="864.04" y1="290.60" x2="864.04" y2="297.60" stroke="#849292" stroke-width="1"/>
<line x1="864.04" y1="411.52" x2="864.04" y2="418.52" stroke="#849292" stroke-width="1"/>
<text transform="translate(866.54,289.10) rotate(-90)" font-size="7" fill="#c2c2c2">200</text>
<text transform="translate(867.84,422.02) rotate(-90)" font-size="7" fill="#c2c2c2" text-anchor="end">200</text>
<line x1="881.90" y1="290.60" x2="881.90" y2="297.60" stroke="#849292" stroke-width="1"/>
<line x1="881.90" y1="411.52" x2="881.90" y2="418.52" stroke="#849292" stroke-width="1"/>
<text transform="translate(884.40,289.10) rotate(-90)" font-size="7" fill="#c2c2c2">250</text>
<text transform="translate(885.70,422.02) rotate(-90)" font-size="7" fill="#c2c2c2" text-anchor="end">250</text>
<line x1="899.76" y1="290.60" x2="899.76" y2="297.60" stroke="#849292" stroke-width="1"/>
<line x1="899.76" y1="411.52" x2="899.76" y2="418.52" stroke="#849292" stroke-width="1"/>
<text transform="translate(902.26,289.10) rotate(-90)" font-size="7" fill="#c2c2c2">300</text>
<text transform="translate(903.56,422.02) rotate(-90)" font-size="7" fill="#c2c2c2" text-anchor="end">300</text>
<line x1="917.62" y1="290.60" x2="917.62" y2="297.60" stroke="#849292" stroke-width="1"/>
<line x1="917.62" y1="411.52" x2="917.62" y2="418.52" stroke="#849292" stroke-width="1"/>
<text transform="translate(920.12,289.10) rotate(-90)" font-size="7" fill="#c2c2c2">350</text>
<text transform="translate(921.42,422.02) rotate(-90)" font-size="7" fill="#c2c2c2" text-anchor="end">350</text>
<line x1="935.48" y1="290.60" x2="935.48" y2="297.60" stroke="#849292" stroke-width="1"/>
<line x1="935.48" y1="411.52" x2="935.48" y2="418.52" stroke="#849292" stroke-width="1"/>
<text transform="translate(937.98,289.10) rotate(-90)" font-size="7" fill="#c2c2c2">400</text>
<text transform="translate(939.28,422.02) rotate(-90)" font-size="7" fill="#c2c2c2" text-anchor="end">400</text>
<line x1="953.34" y1="290.60" x2="953.34" y2="297.60" stroke="#849292" stroke-width="1"/>
<line x1="953.34" y1="411.52" x2="953.34" y2="418.52" stroke="#849292" stroke-width="1"/>
<text transform="translate(955.84,289.10) rotate(-90)" font-size="7" fill="#c2c2c2">450</text>
<text transform="translate(957.14,422.02) rotate(-90)" font-size="7" fill="#c2c2c2" text-anchor="end">450</text>
<line x1="785.60" y1="298.00" x2="792.60" y2="298.00" stroke="#849292" stroke-width="1"/>
<line x1="963.48" y1="298.00" x2="971.98" y2="298.00" stroke="#849292" stroke-width="1"/>
<text x="784.60" y="300.50" font-size="7" fill="#c2c2c2" text-anchor="end">0</text>
<text x="972.98" y="300.50" font-size="7" fill="#c2c2c2">0</text>
<line x1="785.60" y1="315.86" x2="792.60" y2="315.86" stroke="#849292" stroke-width="1"/>
<line x1="963.48" y1="315.86" x2="971.98" y2="315.86" stroke="#849292" stroke-width="1"/>
<text x="784.60" y="318.36" font-size="7" fill="#c2c2c2" text-anchor="end">50</text>
<text x="972.98" y="318.36" font-size="7" fill="#c2c2c2">50</text>
<line x1="785.60" y1="333.72" x2="792.60" y2="333.72" stroke="#849292" stroke-width="1"/>
<line x1="963.48" y1="333.72" x2="971.98" y2="333.72" stroke="#849292" stroke-width="1"/>
<text x="784.60" y="336.22" font-size="7" fill="#c2c2c2" text-anchor="end">100</text>
<text x="972.98" y="336.22" font-size="7" fill="#c2c2c2">100</text>
<line x1="785.60" y1="351.58" x2="792.60" y2="351.58" stroke="#849292" stroke-width="1"/>
<line x1="963.48" y1="351.58" x2="971.98" y2="351.58" stroke="#849292" stroke-width="1"/>
<text x="784.60" y="354.08" font-size="7" fill="#c2c2c2" text-anchor="end">150</text>
<text x="972.98" y="354.08" font-size="7" fill="#c2c2c2">150</text>
<line x1="785.60" y1="369.44" x2="792.60" y2="369.44" stroke="#849292" stroke-width="1"/>
<line x1="963.48" y1="369.44" x2="971.98" y2="369.44" stroke="#849292" stroke-width="1"/>
<text x="784.60" y="371.94" font-size="7" fill="#c2c2c2" text-anchor="end">200</text>
<text x="972.98" y="371.94" font-size="7" fill="#c2c2c2">200</text>
<line x1="785.60" y1="387.30" x2="792.60" y2="387.30" stroke="#849292" stroke-width="1"/>
<line x1="963.48" y1="387.30" x2="971.98" y2="387.30" stroke="#849292" stroke-width="1"/>
<text x="784.60" y="389.80" font-size="7" fill="#c2c2c2" text-anchor="end">250</text>
<text x="972.98" y="389.80" font-size="7" fill="#c2c2c2">250</text>
<line x1="785.60" y1="405.16" x2="792.60" y2="405.16" stroke="#849292" stroke-width="1"/>
<line x1="963.48" y1="405.16" x2="971.98" y2="405.16" stroke="#849292" stroke-width="1"/>
<text x="784.60" y="407.66" font-size="7" fill="#c2c2c2" text-anchor="end">300</text>
<text x="972.98" y="407.66" font-size="7" fill="#c2c2c2">300</text>
<rect x="792.60" y="297.60" width="170.88" height="113.92" fill="none" stroke="#849292" stroke-width="1.2"/>
<g transform="translate(792.60,297.60) scale(0.356)">
<rect x="0" y="0" width="480" height="320" fill="#4a4a4a"/>
<path d="M9 25 H41 M27 10.5 L12 25 L27 39.5" fill="none" stroke="#ffcc29" stroke-width="5.5"/>
<text x="242" y="32.5" font-size="31.5" fill="#ffcc29" text-anchor="middle" font-weight="bold">SET TIME</text>
<path d="M437 31 V45 H446 V35 H454 V45 H464 V31 L450 19.5Z" fill="#ffcc29"/>
<path d="M432 29 L450 13 L468 29" fill="none" stroke="#ffcc29" stroke-width="5"/>
<rect x="456" y="11" width="6.5" height="12" fill="#ffcc29"/>
<rect x="150.6" y="58" width="60.400000000000006" height="49.599999999999994" rx="8" fill="#665412"/>
<path d="M179.8 99 V71 M165.3 84.5 L179.8 70 L194.3 84.5" fill="none" stroke="#ffcc29" stroke-width="6.2" stroke-linejoin="miter"/>
<rect x="150.6" y="232" width="60.400000000000006" height="49" rx="8" fill="#665412"/>
<path d="M179.8 244.5 V272.5 M165.3 259.0 L179.8 273.5 L194.3 259.0" fill="none" stroke="#ffcc29" stroke-width="6.2" stroke-linejoin="miter"/>
<rect x="280" y="58" width="61" height="49.599999999999994" rx="8" fill="#665412"/>
<path d="M309.5 99 V71 M295.0 84.5 L309.5 70 L324.0 84.5" fill="none" stroke="#ffcc29" stroke-width="6.2" stroke-linejoin="miter"/>
<rect x="280" y="232" width="61" height="49" rx="8" fill="#665412"/>
<path d="M309.5 244.5 V272.5 M295.0 259.0 L309.5 273.5 L324.0 259.0" fill="none" stroke="#ffcc29" stroke-width="6.2" stroke-linejoin="miter"/>
<text x="241.7" y="197.8" font-size="85" fill="#ffcc29" text-anchor="middle" font-weight="bold">18:04</text>
</g>
<rect x="526.3" y="451" width="229" height="175.4" fill="#fff"/>
<line x1="554.90" y1="472.20" x2="554.90" y2="479.20" stroke="#849292" stroke-width="1"/>
<line x1="554.90" y1="593.12" x2="554.90" y2="600.12" stroke="#849292" stroke-width="1"/>
<text transform="translate(557.40,470.70) rotate(-90)" font-size="7" fill="#c2c2c2">0</text>
<text transform="translate(558.70,603.62) rotate(-90)" font-size="7" fill="#c2c2c2" text-anchor="end">0</text>
<line x1="572.76" y1="472.20" x2="572.76" y2="479.20" stroke="#849292" stroke-width="1"/>
<line x1="572.76" y1="593.12" x2="572.76" y2="600.12" stroke="#849292" stroke-width="1"/>
<text transform="translate(575.26,470.70) rotate(-90)" font-size="7" fill="#c2c2c2">50</text>
<text transform="translate(576.56,603.62) rotate(-90)" font-size="7" fill="#c2c2c2" text-anchor="end">50</text>
<line x1="590.62" y1="472.20" x2="590.62" y2="479.20" stroke="#849292" stroke-width="1"/>
<line x1="590.62" y1="593.12" x2="590.62" y2="600.12" stroke="#849292" stroke-width="1"/>
<text transform="translate(593.12,470.70) rotate(-90)" font-size="7" fill="#c2c2c2">100</text>
<text transform="translate(594.42,603.62) rotate(-90)" font-size="7" fill="#c2c2c2" text-anchor="end">100</text>
<line x1="608.48" y1="472.20" x2="608.48" y2="479.20" stroke="#849292" stroke-width="1"/>
<line x1="608.48" y1="593.12" x2="608.48" y2="600.12" stroke="#849292" stroke-width="1"/>
<text transform="translate(610.98,470.70) rotate(-90)" font-size="7" fill="#c2c2c2">150</text>
<text transform="translate(612.28,603.62) rotate(-90)" font-size="7" fill="#c2c2c2" text-anchor="end">150</text>
<line x1="626.34" y1="472.20" x2="626.34" y2="479.20" stroke="#849292" stroke-width="1"/>
<line x1="626.34" y1="593.12" x2="626.34" y2="600.12" stroke="#849292" stroke-width="1"/>
<text transform="translate(628.84,470.70) rotate(-90)" font-size="7" fill="#c2c2c2">200</text>
<text transform="translate(630.14,603.62) rotate(-90)" font-size="7" fill="#c2c2c2" text-anchor="end">200</text>
<line x1="644.20" y1="472.20" x2="644.20" y2="479.20" stroke="#849292" stroke-width="1"/>
<line x1="644.20" y1="593.12" x2="644.20" y2="600.12" stroke="#849292" stroke-width="1"/>
<text transform="translate(646.70,470.70) rotate(-90)" font-size="7" fill="#c2c2c2">250</text>
<text transform="translate(648.00,603.62) rotate(-90)" font-size="7" fill="#c2c2c2" text-anchor="end">250</text>
<line x1="662.06" y1="472.20" x2="662.06" y2="479.20" stroke="#849292" stroke-width="1"/>
<line x1="662.06" y1="593.12" x2="662.06" y2="600.12" stroke="#849292" stroke-width="1"/>
<text transform="translate(664.56,470.70) rotate(-90)" font-size="7" fill="#c2c2c2">300</text>
<text transform="translate(665.86,603.62) rotate(-90)" font-size="7" fill="#c2c2c2" text-anchor="end">300</text>
<line x1="679.92" y1="472.20" x2="679.92" y2="479.20" stroke="#849292" stroke-width="1"/>
<line x1="679.92" y1="593.12" x2="679.92" y2="600.12" stroke="#849292" stroke-width="1"/>
<text transform="translate(682.42,470.70) rotate(-90)" font-size="7" fill="#c2c2c2">350</text>
<text transform="translate(683.72,603.62) rotate(-90)" font-size="7" fill="#c2c2c2" text-anchor="end">350</text>
<line x1="697.78" y1="472.20" x2="697.78" y2="479.20" stroke="#849292" stroke-width="1"/>
<line x1="697.78" y1="593.12" x2="697.78" y2="600.12" stroke="#849292" stroke-width="1"/>
<text transform="translate(700.28,470.70) rotate(-90)" font-size="7" fill="#c2c2c2">400</text>
<text transform="translate(701.58,603.62) rotate(-90)" font-size="7" fill="#c2c2c2" text-anchor="end">400</text>
<line x1="715.64" y1="472.20" x2="715.64" y2="479.20" stroke="#849292" stroke-width="1"/>
<line x1="715.64" y1="593.12" x2="715.64" y2="600.12" stroke="#849292" stroke-width="1"/>
<text transform="translate(718.14,470.70) rotate(-90)" font-size="7" fill="#c2c2c2">450</text>
<text transform="translate(719.44,603.62) rotate(-90)" font-size="7" fill="#c2c2c2" text-anchor="end">450</text>
<line x1="547.90" y1="479.60" x2="554.90" y2="479.60" stroke="#849292" stroke-width="1"/>
<line x1="725.78" y1="479.60" x2="734.28" y2="479.60" stroke="#849292" stroke-width="1"/>
<text x="546.90" y="482.10" font-size="7" fill="#c2c2c2" text-anchor="end">0</text>
<text x="735.28" y="482.10" font-size="7" fill="#c2c2c2">0</text>
<line x1="547.90" y1="497.46" x2="554.90" y2="497.46" stroke="#849292" stroke-width="1"/>
<line x1="725.78" y1="497.46" x2="734.28" y2="497.46" stroke="#849292" stroke-width="1"/>
<text x="546.90" y="499.96" font-size="7" fill="#c2c2c2" text-anchor="end">50</text>
<text x="735.28" y="499.96" font-size="7" fill="#c2c2c2">50</text>
<line x1="547.90" y1="515.32" x2="554.90" y2="515.32" stroke="#849292" stroke-width="1"/>
<line x1="725.78" y1="515.32" x2="734.28" y2="515.32" stroke="#849292" stroke-width="1"/>
<text x="546.90" y="517.82" font-size="7" fill="#c2c2c2" text-anchor="end">100</text>
<text x="735.28" y="517.82" font-size="7" fill="#c2c2c2">100</text>
<line x1="547.90" y1="533.18" x2="554.90" y2="533.18" stroke="#849292" stroke-width="1"/>
<line x1="725.78" y1="533.18" x2="734.28" y2="533.18" stroke="#849292" stroke-width="1"/>
<text x="546.90" y="535.68" font-size="7" fill="#c2c2c2" text-anchor="end">150</text>
<text x="735.28" y="535.68" font-size="7" fill="#c2c2c2">150</text>
<line x1="547.90" y1="551.04" x2="554.90" y2="551.04" stroke="#849292" stroke-width="1"/>
<line x1="725.78" y1="551.04" x2="734.28" y2="551.04" stroke="#849292" stroke-width="1"/>
<text x="546.90" y="553.54" font-size="7" fill="#c2c2c2" text-anchor="end">200</text>
<text x="735.28" y="553.54" font-size="7" fill="#c2c2c2">200</text>
<line x1="547.90" y1="568.90" x2="554.90" y2="568.90" stroke="#849292" stroke-width="1"/>
<line x1="725.78" y1="568.90" x2="734.28" y2="568.90" stroke="#849292" stroke-width="1"/>
<text x="546.90" y="571.40" font-size="7" fill="#c2c2c2" text-anchor="end">250</text>
<text x="735.28" y="571.40" font-size="7" fill="#c2c2c2">250</text>
<line x1="547.90" y1="586.76" x2="554.90" y2="586.76" stroke="#849292" stroke-width="1"/>
<line x1="725.78" y1="586.76" x2="734.28" y2="586.76" stroke="#849292" stroke-width="1"/>
<text x="546.90" y="589.26" font-size="7" fill="#c2c2c2" text-anchor="end">300</text>
<text x="735.28" y="589.26" font-size="7" fill="#c2c2c2">300</text>
<rect x="554.90" y="479.20" width="170.88" height="113.92" fill="none" stroke="#849292" stroke-width="1.2"/>
<g transform="translate(554.90,479.20) scale(0.356)">
<rect x="0" y="0" width="480" height="320" fill="#4a4a4a"/>
<path d="M9.7 26 H41.7 M27.7 11.5 L12.7 26 L27.7 40.5" fill="none" stroke="#ffcc29" stroke-width="5.5"/>
<text x="240.7" y="33.5" font-size="32" fill="#ffcc29" text-anchor="middle" font-weight="bold">SET TEMPERATURE</text>
<path d="M435 32 V46 H444 V36 H452 V46 H462 V32 L448 20.5Z" fill="#ffcc29"/>
<path d="M430 30 L448 14 L466 30" fill="none" stroke="#ffcc29" stroke-width="5"/>
<rect x="454" y="12" width="6.5" height="12" fill="#ffcc29"/>
<rect x="17.7" y="89.6" width="49.89999999999999" height="59.0" rx="8" fill="#665412"/>
<path d="M56.6 119 H28.6 M42.6 105 L28.6 119 L42.6 133" fill="none" stroke="#ffcc29" stroke-width="5.5"/>
<line x1="90" y1="119" x2="288" y2="119" stroke="#9e890f" stroke-width="13" stroke-linecap="round"/>
<circle cx="169.7" cy="119" r="16.5" fill="#ffcc29"/>
<rect x="315" y="89.6" width="50" height="59.0" rx="8" fill="#665412"/>
<path d="M326 119 H354 M340 105 L354 119 L340 133" fill="none" stroke="#ffcc29" stroke-width="5.5"/>
<text x="423" y="136.5" font-size="47" fill="#ffcc29" text-anchor="middle" font-weight="bold">21C</text>
</g>
<rect x="764.1" y="451" width="229" height="175.4" fill="#fff"/>
<line x1="793.00" y1="472.20" x2="793.00" y2="479.20" stroke="#849292" stroke-width="1"/>
<line x1="793.00" y1="593.12" x2="793.00" y2="600.12" stroke="#849292" stroke-width="1"/>
<text transform="translate(795.50,470.70) rotate(-90)" font-size="7" fill="#c2c2c2">0</text>
<text transform="translate(796.80,603.62) rotate(-90)" font-size="7" fill="#c2c2c2" text-anchor="end">0</text>
<line x1="810.86" y1="472.20" x2="810.86" y2="479.20" stroke="#849292" stroke-width="1"/>
<line x1="810.86" y1="593.12" x2="810.86" y2="600.12" stroke="#849292" stroke-width="1"/>
<text transform="translate(813.36,470.70) rotate(-90)" font-size="7" fill="#c2c2c2">50</text>
<text transform="translate(814.66,603.62) rotate(-90)" font-size="7" fill="#c2c2c2" text-anchor="end">50</text>
<line x1="828.72" y1="472.20" x2="828.72" y2="479.20" stroke="#849292" stroke-width="1"/>
<line x1="828.72" y1="593.12" x2="828.72" y2="600.12" stroke="#849292" stroke-width="1"/>
<text transform="translate(831.22,470.70) rotate(-90)" font-size="7" fill="#c2c2c2">100</text>
<text transform="translate(832.52,603.62) rotate(-90)" font-size="7" fill="#c2c2c2" text-anchor="end">100</text>
<line x1="846.58" y1="472.20" x2="846.58" y2="479.20" stroke="#849292" stroke-width="1"/>
<line x1="846.58" y1="593.12" x2="846.58" y2="600.12" stroke="#849292" stroke-width="1"/>
<text transform="translate(849.08,470.70) rotate(-90)" font-size="7" fill="#c2c2c2">150</text>
<text transform="translate(850.38,603.62) rotate(-90)" font-size="7" fill="#c2c2c2" text-anchor="end">150</text>
<line x1="864.44" y1="472.20" x2="864.44" y2="479.20" stroke="#849292" stroke-width="1"/>
<line x1="864.44" y1="593.12" x2="864.44" y2="600.12" stroke="#849292" stroke-width="1"/>
<text transform="translate(866.94,470.70) rotate(-90)" font-size="7" fill="#c2c2c2">200</text>
<text transform="translate(868.24,603.62) rotate(-90)" font-size="7" fill="#c2c2c2" text-anchor="end">200</text>
<line x1="882.30" y1="472.20" x2="882.30" y2="479.20" stroke="#849292" stroke-width="1"/>
<line x1="882.30" y1="593.12" x2="882.30" y2="600.12" stroke="#849292" stroke-width="1"/>
<text transform="translate(884.80,470.70) rotate(-90)" font-size="7" fill="#c2c2c2">250</text>
<text transform="translate(886.10,603.62) rotate(-90)" font-size="7" fill="#c2c2c2" text-anchor="end">250</text>
<line x1="900.16" y1="472.20" x2="900.16" y2="479.20" stroke="#849292" stroke-width="1"/>
<line x1="900.16" y1="593.12" x2="900.16" y2="600.12" stroke="#849292" stroke-width="1"/>
<text transform="translate(902.66,470.70) rotate(-90)" font-size="7" fill="#c2c2c2">300</text>
<text transform="translate(903.96,603.62) rotate(-90)" font-size="7" fill="#c2c2c2" text-anchor="end">300</text>
<line x1="918.02" y1="472.20" x2="918.02" y2="479.20" stroke="#849292" stroke-width="1"/>
<line x1="918.02" y1="593.12" x2="918.02" y2="600.12" stroke="#849292" stroke-width="1"/>
<text transform="translate(920.52,470.70) rotate(-90)" font-size="7" fill="#c2c2c2">350</text>
<text transform="translate(921.82,603.62) rotate(-90)" font-size="7" fill="#c2c2c2" text-anchor="end">350</text>
<line x1="935.88" y1="472.20" x2="935.88" y2="479.20" stroke="#849292" stroke-width="1"/>
<line x1="935.88" y1="593.12" x2="935.88" y2="600.12" stroke="#849292" stroke-width="1"/>
<text transform="translate(938.38,470.70) rotate(-90)" font-size="7" fill="#c2c2c2">400</text>
<text transform="translate(939.68,603.62) rotate(-90)" font-size="7" fill="#c2c2c2" text-anchor="end">400</text>
<line x1="953.74" y1="472.20" x2="953.74" y2="479.20" stroke="#849292" stroke-width="1"/>
<line x1="953.74" y1="593.12" x2="953.74" y2="600.12" stroke="#849292" stroke-width="1"/>
<text transform="translate(956.24,470.70) rotate(-90)" font-size="7" fill="#c2c2c2">450</text>
<text transform="translate(957.54,603.62) rotate(-90)" font-size="7" fill="#c2c2c2" text-anchor="end">450</text>
<line x1="786.00" y1="479.60" x2="793.00" y2="479.60" stroke="#849292" stroke-width="1"/>
<line x1="963.88" y1="479.60" x2="972.38" y2="479.60" stroke="#849292" stroke-width="1"/>
<text x="785.00" y="482.10" font-size="7" fill="#c2c2c2" text-anchor="end">0</text>
<text x="973.38" y="482.10" font-size="7" fill="#c2c2c2">0</text>
<line x1="786.00" y1="497.46" x2="793.00" y2="497.46" stroke="#849292" stroke-width="1"/>
<line x1="963.88" y1="497.46" x2="972.38" y2="497.46" stroke="#849292" stroke-width="1"/>
<text x="785.00" y="499.96" font-size="7" fill="#c2c2c2" text-anchor="end">50</text>
<text x="973.38" y="499.96" font-size="7" fill="#c2c2c2">50</text>
<line x1="786.00" y1="515.32" x2="793.00" y2="515.32" stroke="#849292" stroke-width="1"/>
<line x1="963.88" y1="515.32" x2="972.38" y2="515.32" stroke="#849292" stroke-width="1"/>
<text x="785.00" y="517.82" font-size="7" fill="#c2c2c2" text-anchor="end">100</text>
<text x="973.38" y="517.82" font-size="7" fill="#c2c2c2">100</text>
<line x1="786.00" y1="533.18" x2="793.00" y2="533.18" stroke="#849292" stroke-width="1"/>
<line x1="963.88" y1="533.18" x2="972.38" y2="533.18" stroke="#849292" stroke-width="1"/>
<text x="785.00" y="535.68" font-size="7" fill="#c2c2c2" text-anchor="end">150</text>
<text x="973.38" y="535.68" font-size="7" fill="#c2c2c2">150</text>
<line x1="786.00" y1="551.04" x2="793.00" y2="551.04" stroke="#849292" stroke-width="1"/>
<line x1="963.88" y1="551.04" x2="972.38" y2="551.04" stroke="#849292" stroke-width="1"/>
<text x="785.00" y="553.54" font-size="7" fill="#c2c2c2" text-anchor="end">200</text>
<text x="973.38" y="553.54" font-size="7" fill="#c2c2c2">200</text>
<line x1="786.00" y1="568.90" x2="793.00" y2="568.90" stroke="#849292" stroke-width="1"/>
<line x1="963.88" y1="568.90" x2="972.38" y2="568.90" stroke="#849292" stroke-width="1"/>
<text x="785.00" y="571.40" font-size="7" fill="#c2c2c2" text-anchor="end">250</text>
<text x="973.38" y="571.40" font-size="7" fill="#c2c2c2">250</text>
<line x1="786.00" y1="586.76" x2="793.00" y2="586.76" stroke="#849292" stroke-width="1"/>
<line x1="963.88" y1="586.76" x2="972.38" y2="586.76" stroke="#849292" stroke-width="1"/>
<text x="785.00" y="589.26" font-size="7" fill="#c2c2c2" text-anchor="end">300</text>
<text x="973.38" y="589.26" font-size="7" fill="#c2c2c2">300</text>
<rect x="793.00" y="479.20" width="170.88" height="113.92" fill="none" stroke="#849292" stroke-width="1.2"/>
<g transform="translate(793.00,479.20) scale(0.356)">
<rect x="0" y="0" width="480" height="320" fill="#4a4a4a"/>
<path d="M8 26 H40 M26 11.5 L11 26 L26 40.5" fill="none" stroke="#ffcc29" stroke-width="5.5"/>
<text x="240" y="34.5" font-size="31.5" fill="#ffcc29" text-anchor="middle" font-weight="bold">PROGRAM</text>
<path d="M434 32 V46 H443 V36 H451 V46 H461 V32 L447 20.5Z" fill="#ffcc29"/>
<path d="M429 30 L447 14 L465 30" fill="none" stroke="#ffcc29" stroke-width="5"/>
<rect x="453" y="12" width="6.5" height="12" fill="#ffcc29"/>
<text x="44.7" y="83.5" font-size="28" fill="#7a96d2" text-anchor="start" font-weight="bold">Period 1</text>
<text x="223.6" y="83.5" font-size="28" fill="#7a96d2" text-anchor="middle" font-weight="bold">00:00</text>
<text x="324.5" y="83.5" font-size="28" fill="#ffcc29" text-anchor="middle" font-weight="bold">06:30</text>
<text x="425.8" y="83.5" font-size="28" fill="#ffcc29" text-anchor="middle" font-weight="bold">12C</text>
<text x="44.7" y="124.5" font-size="28" fill="#7a96d2" text-anchor="start" font-weight="bold">Period 2</text>
<text x="223.6" y="124.5" font-size="28" fill="#ffcc29" text-anchor="middle" font-weight="bold">06:31</text>
<text x="324.5" y="124.5" font-size="28" fill="#ffcc29" text-anchor="middle" font-weight="bold">10:00</text>
<text x="425.8" y="124.5" font-size="28" fill="#ffcc29" text-anchor="middle" font-weight="bold">21C</text>
<text x="44.7" y="165.5" font-size="28" fill="#7a96d2" text-anchor="start" font-weight="bold">Period 3</text>
<text x="223.6" y="165.5" font-size="28" fill="#ffcc29" text-anchor="middle" font-weight="bold">10:01</text>
<text x="324.5" y="165.5" font-size="28" fill="#ffcc29" text-anchor="middle" font-weight="bold">12:00</text>
<text x="425.8" y="165.5" font-size="28" fill="#ffcc29" text-anchor="middle" font-weight="bold">12C</text>
<text x="44.7" y="205" font-size="28" fill="#7a96d2" text-anchor="start" font-weight="bold">Period 4</text>
<text x="223.6" y="205" font-size="28" fill="#ffcc29" text-anchor="middle" font-weight="bold">12:01</text>
<text x="324.5" y="205" font-size="28" fill="#ffcc29" text-anchor="middle" font-weight="bold">16:30</text>
<text x="425.8" y="205" font-size="28" fill="#ffcc29" text-anchor="middle" font-weight="bold">12C</text>
<text x="44.7" y="245" font-size="28" fill="#7a96d2" text-anchor="start" font-weight="bold">Period 5</text>
<text x="223.6" y="245" font-size="28" fill="#ffcc29" text-anchor="middle" font-weight="bold">16:31</text>
<text x="324.5" y="245" font-size="28" fill="#ffcc29" text-anchor="middle" font-weight="bold">21:00</text>
<text x="425.8" y="245" font-size="28" fill="#ffcc29" text-anchor="middle" font-weight="bold">21C</text>
<text x="44.7" y="285" font-size="28" fill="#7a96d2" text-anchor="start" font-weight="bold">Period 6</text>
<text x="223.6" y="285" font-size="28" fill="#ffcc29" text-anchor="middle" font-weight="bold">21:01</text>
<text x="324.5" y="285" font-size="28" fill="#7a96d2" text-anchor="middle" font-weight="bold">24:00</text>
<text x="425.8" y="285" font-size="28" fill="#ffcc29" text-anchor="middle" font-weight="bold">12C</text>
</g>
</g>
</svg>
</body></html>
